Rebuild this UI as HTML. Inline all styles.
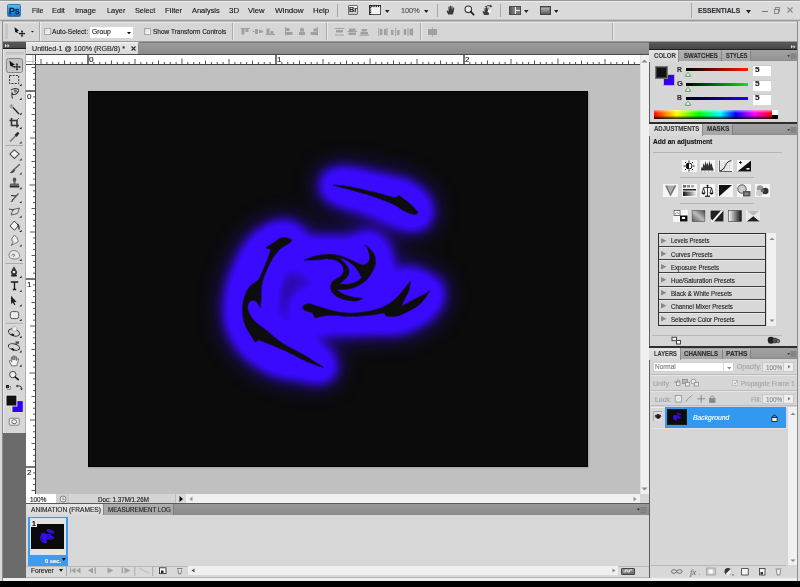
<!DOCTYPE html>
<html><head><meta charset="utf-8">
<style>
*{margin:0;padding:0;box-sizing:border-box}
html,body{width:800px;height:587px;overflow:hidden;background:#d8d8d8;font-family:"Liberation Sans",sans-serif;color:#222}
.a{position:absolute}
.t{position:absolute;white-space:nowrap;font-size:8px;line-height:10px;color:#1e1e1e;-webkit-text-stroke:0.12px currentColor}
svg{position:absolute;overflow:visible}
</style></head><body>
<div class="a" style="left:0;top:0;width:800px;height:21px;background:#dadada"></div>
<div class="a" style="left:0;top:0;width:800px;height:1px;background:#9a9a9a"></div>
<div class="a" style="left:0;top:1px;width:800px;height:1px;background:#ececec"></div>
<div class="a" style="left:0;top:19px;width:800px;height:1px;background:#c4c4c4"></div>
<div class="a" style="left:0;top:20px;width:800px;height:1px;background:#9c9c9c"></div>
<!-- Ps logo -->
<div class="a" style="left:7px;top:4px;width:14px;height:13px;background:linear-gradient(#52c0fa,#2a9aee 45%,#0a6ccc);border:1px solid #3a78b0;border-radius:1.5px"></div>
<div class="a" style="left:337px;top:4px;width:1px;height:13px;background:#a8a8a8"></div>
<!-- Br -->
<div class="a" style="left:347.5px;top:5px;width:10.5px;height:10px;background:linear-gradient(#f4f4f4,#c8c8c8);border:1px solid #6e6e6e;border-radius:1px"></div>
<!-- screen icon -->
<svg style="left:369px;top:5px" width="12" height="10" viewBox="0 0 12 10"><rect x="0.5" y="0.5" width="11" height="9" fill="#eee" stroke="#555" stroke-width="1"/><path d="M0,1.2H12M1.2,0V10" stroke="#222" stroke-width="2.2" stroke-dasharray="1.3,0.9"/><rect x="2.5" y="2.5" width="8.5" height="6.5" fill="#f2f2f2"/></svg>
<svg style="left:385px;top:9.5px" width="5" height="3"><path d="M0,0H4.5L2.25,3Z" fill="#222"/></svg>
<svg style="left:424px;top:9.5px" width="5" height="3"><path d="M0,0H4.5L2.25,3Z" fill="#222"/></svg>
<div class="a" style="left:436.5px;top:4px;width:1px;height:13px;background:#a8a8a8"></div>
<!-- hand -->
<svg style="left:446px;top:5px" width="10" height="10" viewBox="0 0 10 10"><path d="M2.2,9.5 L0.5,6 L1.3,5.4 L2.6,6.6 L2.4,1.8 Q2.9,1.2 3.4,1.8 L3.6,4.8 L3.8,0.9 Q4.4,0.3 4.9,0.9 L5.1,4.6 L5.5,1.3 Q6.1,0.8 6.5,1.4 L6.5,4.8 L7.3,2.6 Q7.9,2.2 8.3,2.8 L7.6,7 L6.8,9.5 Z" fill="#3a3a3a"/></svg>
<!-- zoom -->
<svg style="left:463.5px;top:5px" width="11" height="11" viewBox="0 0 11 11"><circle cx="4.3" cy="4.3" r="3.3" fill="#e8e8e8" stroke="#333" stroke-width="1.1"/><path d="M6.7,6.7 L9.6,9.6" stroke="#222" stroke-width="1.8" stroke-linecap="round"/></svg>
<!-- rotate -->
<svg style="left:482px;top:4px" width="11" height="12" viewBox="0 0 11 12"><path d="M2,11 L0.5,7.5 L1.4,7 L2.6,8 L2.5,4 Q3,3.4 3.5,4 L3.7,6 L3.9,3.3 Q4.5,2.7 5,3.3 L5.1,6 L5.5,3.8 Q6.1,3.3 6.5,3.9 L6.5,6.5 L7.2,5.5 Q7.8,5.2 8,5.8 L7.2,9 L6.5,11 Z" fill="#3c3c3c"/><path d="M3,3 Q6,0.5 9,2.2" fill="none" stroke="#444" stroke-width="1"/><path d="M8.2,0.6 L10.4,2.6 L7.6,3.4Z" fill="#333"/><path d="M6.5,5 L9.5,6.5 L8,9.5 L5.5,8Z" fill="#f4f4f4"/></svg>
<div class="a" style="left:500px;top:4px;width:1px;height:13px;background:#a8a8a8"></div>
<!-- arrange -->
<div class="a" style="left:509px;top:5.5px;width:11.5px;height:9px;background:#f0f0f0;border:1px solid #4a4a4a"></div>
<div class="a" style="left:510px;top:6.5px;width:4.5px;height:7px;background:linear-gradient(90deg,#555,#888)"></div>
<div class="a" style="left:515.5px;top:6.5px;width:4px;height:3px;background:#777"></div>
<div class="a" style="left:515.5px;top:10.5px;width:4px;height:3px;background:#777"></div>
<svg style="left:524px;top:9.5px" width="5" height="3"><path d="M0,0H4.5L2.25,3Z" fill="#222"/></svg>
<!-- screen mode -->
<div class="a" style="left:539.5px;top:6px;width:11px;height:8.5px;border:1px solid #444;background:linear-gradient(#8a8a8a,#5a5a5a)"></div>
<div class="a" style="left:541px;top:7.5px;width:8px;height:5.5px;background:linear-gradient(#b0b0b0,#6a6a6a)"></div>
<svg style="left:554px;top:9.5px" width="5" height="3"><path d="M0,0H4.5L2.25,3Z" fill="#222"/></svg>
<div class="a" style="left:690.5px;top:3px;width:1px;height:15px;background:#a8a8a8"></div>
<svg style="left:745.5px;top:9.5px" width="5" height="3.5"><path d="M0,0H5L2.5,3.5Z" fill="#222"/></svg>
<div class="a" style="left:761.5px;top:11px;width:6px;height:1.2px;background:#777"></div>
<div class="a" style="left:775px;top:7px;width:5px;height:4.5px;border:1px solid #888;border-top-width:1.5px"></div>
<div class="a" style="left:774px;top:8.5px;width:5px;height:5px;border:1px solid #888;border-top-width:1.5px;background:#dadada"></div>
<svg style="left:787px;top:7px" width="6" height="6"><path d="M0.5,0.5L5.5,5.5M5.5,0.5L0.5,5.5" stroke="#888" stroke-width="1.1"/></svg>
<div class="a" style="left:797px;top:21px;width:1px;height:560px;background:#8c8c8c"></div>
<div class="a" style="left:798px;top:21px;width:2px;height:560px;background:#dcdcdc"></div>

<div class="a" style="left:0;top:21px;width:797px;height:21px;background:#d6d6d6"></div>
<div class="a" style="left:2px;top:21px;width:795px;height:1px;background:#bdbdbd"></div>
<div class="a" style="left:2px;top:22px;width:795px;height:1px;background:#e6e6e6"></div>
<div class="a" style="left:0;top:21px;width:2px;height:560px;background:#d9d9d9"></div>
<div class="a" style="left:2px;top:21px;width:1px;height:560px;background:#8e8e8e"></div>
<div class="a" style="left:3px;top:41px;width:794px;height:1px;background:#9a9a9a"></div>
<div class="a" style="left:5px;top:24px;width:3px;height:15px;background:#c6c6c6"></div>
<!-- move icon -->
<svg style="left:13.5px;top:26.5px" width="12" height="10" viewBox="0 0 12 10"><path d="M0.5,0 L5,3.8 L3.2,4.2 L4.6,6.2 L1.2,5 Z" fill="#111"/><path d="M8,3.8V9.4M5.2,6.6H10.8" stroke="#111" stroke-width="1"/><path d="M8,3.3L6.8,4.8H9.2ZM8,9.9L6.8,8.4H9.2ZM4.7,6.6L6.2,5.4V7.8ZM11.3,6.6L9.8,5.4V7.8Z" fill="#111"/></svg>
<svg style="left:30.5px;top:30.7px" width="3" height="2"><path d="M0,0H2.8L1.4,1.6Z" fill="#111"/></svg>
<div class="a" style="left:39px;top:22px;width:1px;height:19px;background:#a9a9a9"></div>
<div class="a" style="left:40px;top:22px;width:1px;height:19px;background:#ececec"></div>
<!-- checkbox -->
<div class="a" style="left:43.5px;top:27.5px;width:7px;height:7px;border:1px solid #a8a8a8;background:linear-gradient(135deg,#dcdcdc,#fafafa)"></div>
<div class="a" style="left:90px;top:27px;width:43px;height:11px;background:#fff"></div>
<svg style="left:126.5px;top:32px" width="4" height="2.5"><path d="M0,0H4L2,2.2Z" fill="#000"/></svg>
<div class="a" style="left:144px;top:27.5px;width:7px;height:7px;border:1px solid #a8a8a8;background:linear-gradient(135deg,#dcdcdc,#fafafa)"></div>
<div class="a" style="left:232px;top:23px;width:1px;height:17px;background:#a9a9a9"></div>
<div class="a" style="left:233px;top:23px;width:1px;height:17px;background:#ececec"></div>
<div class="a" style="left:326px;top:23px;width:1px;height:17px;background:#a9a9a9"></div>
<div class="a" style="left:327px;top:23px;width:1px;height:17px;background:#ececec"></div>
<div class="a" style="left:419.5px;top:23px;width:1px;height:17px;background:#a9a9a9"></div>
<div class="a" style="left:420.5px;top:23px;width:1px;height:17px;background:#ececec"></div>
<div class="a" style="left:612px;top:23px;width:1px;height:17px;background:#a9a9a9"></div>
<div class="a" style="left:613px;top:23px;width:1px;height:17px;background:#ececec"></div>
<!-- align icons -->
<svg style="left:240px;top:27px" width="200" height="10" viewBox="240 27 200 10">
<g fill="#a0a0a0" stroke="none">
<rect x="240.8" y="28" width="9" height="1"/><rect x="241.5" y="29" width="3" height="5.5"/><rect x="245.5" y="29" width="3" height="3"/>
<rect x="252.5" y="31" width="2" height="1"/><rect x="255" y="29" width="3" height="5"/><rect x="259" y="30" width="2.5" height="3"/><path d="M261,30L263.5,31.5L261,33Z"/>
<rect x="265.6" y="34" width="9.4" height="1"/><rect x="266.5" y="28.5" width="3" height="5.5"/><rect x="270.5" y="31" width="3" height="3"/>
<rect x="285" y="27" width="1" height="8.6"/><rect x="286" y="28" width="3.5" height="3"/><rect x="286" y="32" width="6.5" height="3"/>
<rect x="301.5" y="27" width="1" height="8.6"/><rect x="300" y="28.5" width="4" height="3"/><rect x="299" y="32" width="6" height="3"/>
<rect x="317" y="27" width="1" height="8.6"/><rect x="313.5" y="28.5" width="3.5" height="3"/><rect x="310.6" y="32" width="6.4" height="3"/>
<rect x="334.7" y="28" width="9.8" height="1"/><rect x="336" y="30" width="7" height="2.5"/><rect x="335" y="34.5" width="9" height="1"/>
<rect x="347.5" y="31" width="9.7" height="1"/><rect x="349" y="28.5" width="6.5" height="2.5"/><rect x="348.5" y="32.5" width="7.5" height="2.5"/>
<rect x="359.5" y="34.7" width="9.7" height="1"/><rect x="361.5" y="29" width="5.5" height="2.5"/><rect x="360.5" y="32" width="7.5" height="2.5"/>
<rect x="378.2" y="28" width="1" height="8"/><rect x="380" y="29" width="2.5" height="6"/><rect x="384" y="29" width="2.5" height="6"/><rect x="386.5" y="28" width="1" height="8"/>
<rect x="391" y="30" width="2.5" height="5"/><rect x="395" y="28" width="1" height="8"/><rect x="397" y="30" width="2.5" height="5"/>
<rect x="403.7" y="29" width="2.5" height="6"/><rect x="407.5" y="28" width="1" height="8"/><rect x="409.5" y="29" width="2.5" height="6"/><rect x="412" y="28" width="1" height="8"/>
<rect x="428" y="29" width="4" height="6"/><rect x="433" y="29" width="4" height="6"/><rect x="432" y="27.5" width="1" height="9"/>
</g></svg>

<div class="a" style="left:3px;top:42px;width:23px;height:7px;background:linear-gradient(#585858,#4a4a4a);border-bottom:1px solid #1c1c1c"></div>
<svg style="left:4.5px;top:44px" width="5" height="4"><path d="M0,0L2,1.75L0,3.5ZM2.5,0L4.5,1.75L2.5,3.5Z" fill="#e8e8e8"/></svg>
<div class="a" style="left:3px;top:49px;width:23px;height:384px;background:#d7d7d7;border-left:1px solid #e9e9e9;border-right:1px solid #b0b0b0"></div>
<div class="a" style="left:5.5px;top:52px;width:18px;height:3px;background:#c8c8c8;border-top:1px solid #bdbdbd"></div>
<div class="a" style="left:3px;top:433px;width:23px;height:146px;background:#6b6b6b"></div>
<div class="a" style="left:26px;top:42px;width:0.6px;height:537px;background:#555"></div>
<!-- move tool button -->
<div class="a" style="left:6px;top:58px;width:17px;height:14.5px;border:1px solid #858585;border-radius:2.5px;background:linear-gradient(#c2c2c2,#cacaca)"></div>
<svg style="left:0;top:0" width="26" height="440" viewBox="0 0 26 440">
<g fill="#111">
<!-- move -->
<path d="M9.4,60.8 L15,64.8 L12.8,65.3 L14.2,67.2 L10.3,66 Z"/>
<path d="M17,63.8V70M13.9,66.9H20.1" stroke="#111" stroke-width="1"/>
<path d="M17,63.2L15.8,64.6H18.2ZM17,70.6L15.8,69.2H18.2ZM13.3,66.9L14.7,65.7V68.1ZM20.7,66.9L19.3,65.7V68.1Z"/>
<!-- small corner dots -->
<g fill="#1a1a1a">
<path d="M19.4,85.9L21.6,85.9L21.6,83.7Z"/><path d="M19.4,99.9L21.6,99.9L21.6,97.7Z"/><path d="M19.4,114.7L21.6,114.7L21.6,112.5Z"/><path d="M19.4,128.9L21.6,128.9L21.6,126.7Z"/><path d="M19.4,143.5L21.6,143.5L21.6,141.3Z"/>
<path d="M19.4,160.4L21.6,160.4L21.6,158.2Z"/><path d="M19.4,174.6L21.6,174.6L21.6,172.4Z"/><path d="M19.4,189.3L21.6,189.3L21.6,187.1Z"/><path d="M19.4,203.1L21.6,203.1L21.6,200.9Z"/><path d="M19.4,217.8L21.6,217.8L21.6,215.6Z"/><path d="M19.4,232.0L21.6,232.0L21.6,229.8Z"/><path d="M19.4,246.6L21.6,246.6L21.6,244.4Z"/><path d="M19.4,260.9L21.6,260.9L21.6,258.7Z"/>
<path d="M19.4,277.9L21.6,277.9L21.6,275.7Z"/><path d="M19.4,292.1L21.6,292.1L21.6,289.9Z"/><path d="M19.4,306.4L21.6,306.4L21.6,304.2Z"/><path d="M19.4,321.0L21.6,321.0L21.6,318.8Z"/>
<path d="M19.4,337.9L21.6,337.9L21.6,335.7Z"/><path d="M19.4,352.5L21.6,352.5L21.6,350.3Z"/><path d="M19.4,366.8L21.6,366.8L21.6,364.6Z"/>
</g>
</g>
<!-- marquee -->
<rect x="9.5" y="75.5" width="9.2" height="8" fill="none" stroke="#333" stroke-width="1" stroke-dasharray="2,1.2"/>
<!-- lasso -->
<path d="M11,90 Q14,87.5 18,89 Q19.5,91.5 16,94 Q13,95.5 12,93 Q11.5,96 12.5,98.5" fill="none" stroke="#3a3a3a" stroke-width="1.1"/>
<path d="M13.5,89 L16.5,89.5 L17,92 L14.5,93Z" fill="#777"/>
<!-- wand -->
<path d="M13,107.5 L19,114" stroke="#222" stroke-width="1.3"/>
<path d="M11.5,104 V108.5 M9.5,106.2 H13.5 M10,104.5 L13,108 M13,104.5 L10,108" stroke="#888" stroke-width="0.7"/>
<!-- crop -->
<path d="M11.5,118 V125.5 H19 M9.5,120.5 H17 V127.5" fill="none" stroke="#333" stroke-width="1.6"/>
<path d="M17,120 L19,118" stroke="#444" stroke-width="0.8"/>
<!-- eyedropper -->
<path d="M10,141.5 L15.5,136" stroke="#777" stroke-width="1.4"/>
<path d="M14.5,135 L17.5,132 Q19,132 19.3,133.5 L16.5,137 Z" fill="#2a2a2a"/>
<!-- separator -->
<rect x="5.5" y="145" width="17.5" height="0.9" fill="#a8a8a8"/>
<!-- healing (patch) -->
<path d="M14.4,149.8 L19.2,154 L14.4,158.4 L9.8,154 Z" fill="#f2f2f2" stroke="#555" stroke-width="1.1"/>
<!-- brush -->
<path d="M19.8,164.2 L13.5,170" stroke="#555" stroke-width="1.2"/>
<path d="M13.8,169 L10,172.8 Q11,173.5 13,172.8 L15.2,170.8 Z" fill="#444"/>
<!-- stamp -->
<ellipse cx="14.5" cy="179.8" rx="1.8" ry="2.2" fill="#555"/>
<path d="M13.5,181.5 V183.5 H10.5 Q9.5,184 9.8,186.5 H19.2 Q19.5,184 18.5,183.5 H15.5 V181.5Z" fill="#666"/>
<rect x="9.8" y="186" width="9.4" height="1.5" fill="#2a2a2a"/>
<!-- history brush -->
<path d="M18.5,193.5 L12,200.5" stroke="#555" stroke-width="1.2"/>
<path d="M11,195.5 L16,196" stroke="#222" stroke-width="1.2"/>
<path d="M12.5,199.5 L10.5,202 L13,201.5Z" fill="#444"/>
<!-- eraser -->
<path d="M13,209.5 L19.5,208 L17.5,213.5 L11,215 Z" fill="#ddd" stroke="#555" stroke-width="0.9"/>
<path d="M9,209 L14,210" stroke="#333" stroke-width="0.9"/>
<!-- bucket -->
<path d="M10,226 L14.3,221 L18.5,225.5 L14.5,230.2 Z" fill="#f4f4f4" stroke="#444" stroke-width="1"/>
<path d="M17.5,224 Q19.5,226 19,229.5" stroke="#222" stroke-width="1.4" fill="none"/>
<!-- blur drop -->
<path d="M14.5,235 Q17.8,238 18.2,240.5 Q18,243 15.5,243.2 L11,245.4 L13.2,242 Q10.8,240 12,238 Z" fill="#eee" stroke="#666" stroke-width="0.9"/>
<!-- dodge swirl -->
<path d="M9,255.5 Q9,250.5 14.5,250.5 Q19.5,251.5 19.8,256.5 Q19,259.2 14,259 Q9.3,258.8 9,255.5Z" fill="#e9e9e9" stroke="#777" stroke-width="0.9"/>
<path d="M11.5,255.5 Q12.5,253 14.5,254.5 Q15,256.5 13,256.5" fill="none" stroke="#666" stroke-width="0.8"/>
<rect x="5.5" y="263" width="17.5" height="0.9" fill="#a8a8a8"/>
<!-- pen -->
<path d="M14,266.2 L17.2,272 L16.2,275 H11.8 L10.8,272 Z" fill="#333"/>
<circle cx="14" cy="272" r="1.3" fill="#f0f0f0"/>
<rect x="11.2" y="275" width="5.6" height="1.5" fill="#222"/>
<!-- T -->
<path d="M10.8,282 H18.2 M14.5,282 V289.7 M12.8,289.5 H16.2" stroke="#1a1a1a" stroke-width="1.3"/>
<!-- path select arrow -->
<path d="M11,295.7 L16.5,301.8 L14.2,302.2 L15.5,304.7 L14.2,305 L12.8,302.6 L11,304 Z" fill="#222"/>
<!-- shape -->
<rect x="10.3" y="311.6" width="8.4" height="7" rx="2" fill="#ececec" stroke="#555" stroke-width="1"/>
<rect x="5.5" y="322.8" width="17.5" height="0.9" fill="#a8a8a8"/>
<!-- 3D rotate -->
<ellipse cx="14" cy="332.5" rx="5.7" ry="3.3" fill="none" stroke="#333" stroke-width="1" transform="rotate(20 14 332.5)"/>
<circle cx="14.5" cy="329" r="2.4" fill="#f0f0f0" stroke="#999" stroke-width="0.6"/>
<path d="M11.5,334 L14,335.5" stroke="#111" stroke-width="1.6"/>
<!-- 3D camera -->
<ellipse cx="14" cy="347" rx="5.8" ry="3" fill="none" stroke="#333" stroke-width="1" transform="rotate(15 14 347)"/>
<rect x="15.5" y="341.5" width="3.5" height="2.2" fill="#444"/>
<path d="M11.5,348.5 L14,350" stroke="#111" stroke-width="1.6"/>
<!-- hand -->
<path d="M11.5,365.8 L9.2,361 L10.3,360.2 L11.8,361.8 L11.5,357 Q12.1,356.3 12.7,357 L13,360 L13.2,356 Q13.9,355.4 14.5,356 L14.7,360 L15.3,356.6 Q16,356.1 16.5,356.8 L16.4,360.5 L17.3,358.6 Q18.1,358.3 18.6,359 L17.6,363.2 L16.6,365.9 Z" fill="#f2f2f2" stroke="#555" stroke-width="0.8"/>
<!-- zoom -->
<circle cx="12.8" cy="374.6" r="3.2" fill="#f0f0f0" stroke="#444" stroke-width="1"/>
<path d="M15.2,377 L18.3,379.6" stroke="#111" stroke-width="1.6" stroke-linecap="round"/>
<!-- default colors -->
<rect x="6" y="385" width="3" height="3" fill="#111"/><rect x="7.5" y="386.5" width="3" height="3" fill="none" stroke="#666" stroke-width="0.6"/>
<path d="M16.5,386 H19.5 Q21.5,386 21.5,388.5" fill="none" stroke="#222" stroke-width="0.9"/>
<path d="M16,386 L17.5,384.5 V387.5Z M21.5,390.2 L20,388.5 H23Z" fill="#222"/>
<!-- fg/bg -->
<rect x="12" y="400.7" width="11.2" height="11.7" fill="#3200f0" stroke="#f0f0e0" stroke-width="0.8"/>
<rect x="6" y="395.1" width="10.9" height="10.9" fill="#111" stroke="#f4f4e8" stroke-width="0.9"/>
<!-- quick mask -->
<rect x="9.2" y="418.2" width="10" height="7" rx="1" fill="#eee" stroke="#777" stroke-width="0.9"/>
<ellipse cx="14.2" cy="421.7" rx="2.5" ry="2" fill="#fff" stroke="#555" stroke-width="0.9"/>
</svg>


<!-- doc tab bar -->
<div class="a" style="left:26px;top:42px;width:623px;height:13px;background:linear-gradient(#9c9c9c,#8a8a8a);border-top:1px solid #7a7a7a"></div>
<div class="a" style="left:26px;top:42px;width:113px;height:12.5px;background:linear-gradient(#e6e6e6,#d9d9d9);border-top:1px solid #f2f2f2;border-right:1px solid #8a8a8a"></div>
<div class="a" style="left:26px;top:54px;width:623px;height:1px;background:#4a4a4a"></div>
<svg style="left:131px;top:46px" width="5" height="5"><path d="M0.5,0.5L4.5,4.5M4.5,0.5L0.5,4.5" stroke="#333" stroke-width="1.1"/></svg>
<!-- rulers -->
<div class="a" style="left:26px;top:55px;width:614px;height:10px;background:#fff"></div>
<div class="a" style="left:26px;top:65px;width:10px;height:429px;background:#fff"></div>
<svg style="left:0;top:0" width="800" height="587" viewBox="0 0 800 587">
<path d="M26,64.5H640 M35.5,55V494" stroke="#404040" stroke-width="1"/>
<path d="M26,61.5H36 M33,55V65" stroke="#b0b0b0" stroke-width="0.8"/>
<path d="M46.88,62.00V64.5 M52.75,62.00V64.5 M58.62,62.00V64.5 M70.38,62.00V64.5 M76.25,62.00V64.5 M82.12,62.00V64.5 M93.88,62.00V64.5 M99.75,62.00V64.5 M105.62,62.00V64.5 M117.38,62.00V64.5 M123.25,62.00V64.5 M129.12,62.00V64.5 M140.88,62.00V64.5 M146.75,62.00V64.5 M152.62,62.00V64.5 M164.38,62.00V64.5 M170.25,62.00V64.5 M176.12,62.00V64.5 M187.88,62.00V64.5 M193.75,62.00V64.5 M199.62,62.00V64.5 M211.38,62.00V64.5 M217.25,62.00V64.5 M223.12,62.00V64.5 M234.88,62.00V64.5 M240.75,62.00V64.5 M246.62,62.00V64.5 M258.38,62.00V64.5 M264.25,62.00V64.5 M270.12,62.00V64.5 M281.88,62.00V64.5 M287.75,62.00V64.5 M293.62,62.00V64.5 M305.38,62.00V64.5 M311.25,62.00V64.5 M317.12,62.00V64.5 M328.88,62.00V64.5 M334.75,62.00V64.5 M340.62,62.00V64.5 M352.38,62.00V64.5 M358.25,62.00V64.5 M364.12,62.00V64.5 M375.88,62.00V64.5 M381.75,62.00V64.5 M387.62,62.00V64.5 M399.38,62.00V64.5 M405.25,62.00V64.5 M411.12,62.00V64.5 M422.88,62.00V64.5 M428.75,62.00V64.5 M434.62,62.00V64.5 M446.38,62.00V64.5 M452.25,62.00V64.5 M458.12,62.00V64.5 M469.88,62.00V64.5 M475.75,62.00V64.5 M481.62,62.00V64.5 M493.38,62.00V64.5 M499.25,62.00V64.5 M505.12,62.00V64.5 M516.88,62.00V64.5 M522.75,62.00V64.5 M528.62,62.00V64.5 M540.38,62.00V64.5 M546.25,62.00V64.5 M552.12,62.00V64.5 M563.88,62.00V64.5 M569.75,62.00V64.5 M575.62,62.00V64.5 M587.38,62.00V64.5 M593.25,62.00V64.5 M599.12,62.00V64.5 M610.88,62.00V64.5 M616.75,62.00V64.5 M622.62,62.00V64.5 M634.38,62.00V64.5 M33.00,73.38H35.5 M33.00,79.25H35.5 M33.00,85.12H35.5 M33.00,96.88H35.5 M33.00,102.75H35.5 M33.00,108.62H35.5 M33.00,120.38H35.5 M33.00,126.25H35.5 M33.00,132.12H35.5 M33.00,143.88H35.5 M33.00,149.75H35.5 M33.00,155.62H35.5 M33.00,167.38H35.5 M33.00,173.25H35.5 M33.00,179.12H35.5 M33.00,190.88H35.5 M33.00,196.75H35.5 M33.00,202.62H35.5 M33.00,214.38H35.5 M33.00,220.25H35.5 M33.00,226.12H35.5 M33.00,237.88H35.5 M33.00,243.75H35.5 M33.00,249.62H35.5 M33.00,261.38H35.5 M33.00,267.25H35.5 M33.00,273.12H35.5 M33.00,284.88H35.5 M33.00,290.75H35.5 M33.00,296.62H35.5 M33.00,308.38H35.5 M33.00,314.25H35.5 M33.00,320.12H35.5 M33.00,331.88H35.5 M33.00,337.75H35.5 M33.00,343.62H35.5 M33.00,355.38H35.5 M33.00,361.25H35.5 M33.00,367.12H35.5 M33.00,378.88H35.5 M33.00,384.75H35.5 M33.00,390.62H35.5 M33.00,402.38H35.5 M33.00,408.25H35.5 M33.00,414.12H35.5 M33.00,425.88H35.5 M33.00,431.75H35.5 M33.00,437.62H35.5 M33.00,449.38H35.5 M33.00,455.25H35.5 M33.00,461.12H35.5 M33.00,472.88H35.5 M33.00,478.75H35.5 M33.00,484.62H35.5" stroke="#404040" stroke-width="0.9"/>
<path d="M41.00,59.00V64.5 M64.50,60.50V64.5 M88.00,54.50V64.5 M111.50,60.50V64.5 M135.00,59.00V64.5 M158.50,60.50V64.5 M182.00,58.50V64.5 M205.50,60.50V64.5 M229.00,59.00V64.5 M252.50,60.50V64.5 M276.00,54.50V64.5 M299.50,60.50V64.5 M323.00,59.00V64.5 M346.50,60.50V64.5 M370.00,58.50V64.5 M393.50,60.50V64.5 M417.00,59.00V64.5 M440.50,60.50V64.5 M464.00,54.50V64.5 M487.50,60.50V64.5 M511.00,59.00V64.5 M534.50,60.50V64.5 M558.00,58.50V64.5 M581.50,60.50V64.5 M605.00,59.00V64.5 M628.50,60.50V64.5 M31.50,67.50H35.5 M25.50,91.00H35.5 M31.50,114.50H35.5 M30.00,138.00H35.5 M31.50,161.50H35.5 M29.50,185.00H35.5 M31.50,208.50H35.5 M30.00,232.00H35.5 M31.50,255.50H35.5 M25.50,279.00H35.5 M31.50,302.50H35.5 M30.00,326.00H35.5 M31.50,349.50H35.5 M29.50,373.00H35.5 M31.50,396.50H35.5 M30.00,420.00H35.5 M31.50,443.50H35.5 M25.50,467.00H35.5 M31.50,490.50H35.5" stroke="#454545" stroke-width="0.9"/>
<path d="M88,55V64.5 M276,55V64.5 M464,55V64.5 M26,91H35.5 M26,279H35.5 M26,467H35.5" stroke="#404040" stroke-width="1"/>
</svg>
<!-- canvas bg -->
<div class="a" style="left:36px;top:65px;width:604px;height:429px;background:#c0c0c0"></div>
<div class="a" style="left:88px;top:467px;width:501px;height:2px;background:linear-gradient(#a8a8a8,#bcbcbc)"></div>
<div class="a" style="left:588px;top:92px;width:2px;height:376px;background:linear-gradient(90deg,#a8a8a8,#bcbcbc)"></div>
<!-- v scrollbar -->
<div class="a" style="left:640px;top:55px;width:9px;height:439px;background:#f0f0f0;border-left:1px solid #e0e0e0"></div>
<svg style="left:641px;top:59px" width="7" height="4"><path d="M0.5,3.5L3.5,0.5L6.5,3.5Z" fill="#8a8a8a"/></svg>
<svg style="left:641px;top:487px" width="7" height="4"><path d="M0.5,0.5L3.5,3.5L6.5,0.5Z" fill="#8a8a8a"/></svg>
<!-- status bar -->
<div class="a" style="left:26px;top:494px;width:623px;height:9px;background:#d9d9d9"></div>
<div class="a" style="left:26px;top:494px;width:29.5px;height:9px;background:#fff"></div>
<div class="a" style="left:56px;top:494px;width:13px;height:9px;background:#d0d0d0;border-right:1px solid #c0c0c0"></div>
<svg style="left:58.5px;top:494.8px" width="8" height="8"><circle cx="4" cy="4" r="3" fill="#e4e4e4" stroke="#888" stroke-width="1"/><path d="M4,2.5V4.5H5.5" stroke="#777" stroke-width="0.8" fill="none"/></svg>
<div class="a" style="left:69.5px;top:494px;width:106px;height:9px;background:#d4d4d4;border-right:1px solid #bcbcbc"></div>
<svg style="left:179px;top:495.5px" width="5" height="6"><path d="M0.5,0L4,3L0.5,6Z" fill="#000"/></svg>
<div class="a" style="left:185.5px;top:494px;width:454.5px;height:9px;background:#f0f0f0"></div>
<svg style="left:188.5px;top:496px" width="4" height="6"><path d="M3.5,0.5L0.5,3L3.5,5.5Z" fill="#999"/></svg>
<svg style="left:632.5px;top:496px" width="4" height="6"><path d="M0.5,0.5L3.5,3L0.5,5.5Z" fill="#999"/></svg>
<div class="a" style="left:640px;top:494px;width:9px;height:9px;background:#d6d6d6"></div>

<svg class="a" style="left:88px;top:91px" width="500" height="376" viewBox="88 91 500 376">
<defs>
<filter id="gl" x="-50%" y="-50%" width="200%" height="200%" color-interpolation-filters="sRGB">
<feGaussianBlur in="SourceAlpha" stdDeviation="10" result="b"/>
<feComponentTransfer in="b" result="bb"><feFuncA type="linear" slope="10" intercept="-0.13"/></feComponentTransfer>
<feGaussianBlur in="bb" stdDeviation="4.5" result="core"/>
<feGaussianBlur in="bb" stdDeviation="13" result="h0"/>
<feComponentTransfer in="h0" result="halo"><feFuncA type="linear" slope="0.55" intercept="0"/></feComponentTransfer>
<feComposite in="core" in2="halo" operator="over" result="bc0"/>
<feComponentTransfer in="bc0" result="bc"><feFuncA type="linear" slope="1.12" intercept="0"/></feComponentTransfer>
<feFlood flood-color="#3a0aff"/>
<feComposite in2="bc" operator="in" result="g"/>
</filter>
<filter id="sp" x="-100%" y="-100%" width="300%" height="300%"><feGaussianBlur stdDeviation="6"/></filter>
<filter id="sb" x="-10%" y="-10%" width="120%" height="120%"><feGaussianBlur stdDeviation="0.45"/></filter>
<g id="shp">
<path d="M333.00,185.00 C333.00,185.00 343.00,185.65 350.00,186.90 C357.00,188.15 367.72,190.73 375.00,192.50 C382.28,194.27 389.75,197.02 393.70,197.50 C397.65,197.98 398.70,195.40 398.70,195.40 C398.70,195.40 400.20,196.29 402.50,198.10 C404.80,199.91 409.90,203.85 412.50,206.25 C415.10,208.65 418.10,212.50 418.10,212.50 C418.10,212.50 417.18,214.61 415.00,214.40 C412.82,214.19 408.75,213.03 405.00,211.25 C401.25,209.47 397.50,206.14 392.50,203.75 C387.50,201.36 381.04,198.98 375.00,196.90 C368.96,194.82 362.08,192.92 356.25,191.25 C350.42,189.58 343.88,187.94 340.00,186.90 C336.12,185.86 333.00,185.00 333.00,185.00 Z"/>
<path d="M291.00,239.50 C289.80,238.70 285.67,237.00 282.70,237.60 C279.73,238.20 275.98,241.38 273.20,243.10 C270.42,244.82 266.00,247.90 266.00,247.90 C266.00,247.90 270.80,249.10 270.80,249.10 C270.80,249.10 269.30,255.02 268.00,258.60 C266.70,262.18 264.52,267.03 263.00,270.60 C261.48,274.17 258.90,280.00 258.90,280.00 C258.90,280.00 251.78,284.10 249.30,287.30 C246.82,290.50 245.12,295.23 244.00,299.20 C242.88,303.17 242.52,307.13 242.60,311.10 C242.68,315.07 243.38,319.42 244.50,323.00 C245.62,326.58 247.50,329.40 249.30,332.60 C251.10,335.80 255.30,342.20 255.30,342.20 C255.30,342.20 258.90,339.80 258.90,339.80 C258.90,339.80 266.03,342.62 270.80,344.60 C275.57,346.58 281.53,348.92 287.50,351.70 C293.47,354.48 300.63,358.67 306.60,361.30 C312.57,363.93 323.30,367.50 323.30,367.50 C323.30,367.50 310.97,359.32 304.20,355.30 C297.43,351.28 289.07,347.58 282.70,343.40 C276.33,339.22 270.78,333.98 266.00,330.20 C261.22,326.42 256.98,323.88 254.00,320.70 C251.02,317.52 249.08,313.88 248.10,311.10 C247.12,308.32 247.50,305.78 248.10,304.00 C248.70,302.22 250.30,300.80 251.70,300.40 C253.10,300.00 255.07,300.40 256.50,301.60 C257.93,302.80 260.30,307.60 260.30,307.60 C260.30,307.60 260.88,302.18 261.00,299.20 C261.12,296.22 260.75,292.68 261.00,289.70 C261.25,286.72 261.58,284.58 262.50,281.30 C263.42,278.02 264.83,273.80 266.50,270.00 C268.17,266.20 270.25,262.00 272.50,258.50 C274.75,255.00 277.10,251.68 280.00,249.00 C282.90,246.32 288.07,243.98 289.90,242.40 C291.73,240.82 292.20,240.30 291.00,239.50 Z"/>
<path d="M304.50,259.90 C304.50,259.90 312.08,256.92 316.00,256.00 C319.92,255.08 324.30,254.48 328.00,254.40 C331.70,254.32 334.80,254.75 338.20,255.50 C341.60,256.25 345.33,257.67 348.40,258.90 C351.47,260.13 354.10,261.83 356.60,262.90 C359.10,263.97 363.40,265.30 363.40,265.30 C363.40,265.30 367.43,263.47 368.50,262.00 C369.57,260.53 369.88,258.58 369.80,256.50 C369.72,254.42 368.82,251.42 368.00,249.50 C367.18,247.58 364.90,245.00 364.90,245.00 C364.90,245.00 369.82,248.42 371.50,250.50 C373.18,252.58 374.42,255.08 375.00,257.50 C375.58,259.92 375.42,262.75 375.00,265.00 C374.58,267.25 373.55,268.97 372.50,271.00 C371.45,273.03 370.10,275.40 368.70,277.20 C367.30,279.00 366.12,280.27 364.10,281.80 C362.08,283.33 359.08,285.25 356.60,286.40 C354.12,287.55 351.59,288.18 349.20,288.70 C346.81,289.22 344.27,289.41 342.25,289.50 C340.23,289.59 337.10,289.25 337.10,289.25 C337.10,289.25 340.00,284.40 340.00,284.40 C340.00,284.40 345.52,284.70 348.00,284.40 C350.48,284.10 352.78,283.52 354.90,282.60 C357.02,281.68 359.55,279.90 360.70,278.90 C361.85,277.90 361.80,276.60 361.80,276.60 C361.80,276.60 361.22,276.70 360.70,275.90 C360.18,275.10 359.60,273.28 358.70,271.80 C357.80,270.32 356.67,268.48 355.30,267.00 C353.93,265.52 352.22,264.15 350.50,262.90 C348.78,261.65 347.05,260.45 345.00,259.50 C342.95,258.55 340.70,257.48 338.20,257.20 C335.70,256.92 333.37,257.37 330.00,257.80 C326.63,258.23 322.25,259.45 318.00,259.80 C313.75,260.15 304.50,259.90 304.50,259.90 Z"/>
<path d="M326.00,256.30 C326.00,256.30 335.37,256.92 338.20,257.80 C341.03,258.68 341.52,260.17 343.00,261.60 C344.48,263.03 346.13,264.93 347.10,266.40 C348.07,267.87 348.58,269.05 348.80,270.40 C349.02,271.75 348.92,273.13 348.40,274.50 C347.88,275.87 346.83,277.40 345.70,278.60 C344.57,279.80 342.63,280.63 341.60,281.70 C340.57,282.77 340.25,283.74 339.50,285.00 C338.75,286.26 337.10,289.25 337.10,289.25 C337.10,289.25 337.47,290.64 338.80,291.60 C340.13,292.56 342.61,294.05 345.10,295.00 C347.59,295.95 350.87,296.72 353.75,297.30 C356.63,297.88 362.40,298.50 362.40,298.50 C362.40,298.50 359.00,300.52 356.60,300.80 C354.20,301.08 350.77,300.68 348.00,300.20 C345.23,299.72 342.30,298.87 340.00,297.90 C337.70,296.93 335.65,295.65 334.20,294.40 C332.75,293.15 331.87,291.83 331.30,290.40 C330.73,288.97 330.60,287.23 330.80,285.80 C331.00,284.37 331.55,282.95 332.50,281.80 C333.45,280.65 335.05,279.87 336.50,278.90 C337.95,277.93 340.02,277.23 341.20,276.00 C342.38,274.77 343.25,273.00 343.60,271.50 C343.95,270.00 343.85,268.43 343.30,267.00 C342.75,265.57 341.72,264.08 340.30,262.90 C338.88,261.72 336.85,260.57 334.80,259.90 C332.75,259.23 328.00,258.90 328.00,258.90 C328.00,258.90 326.00,256.30 326.00,256.30 Z"/>
<path d="M302.90,306.50 C303.63,305.48 305.93,303.72 309.00,303.90 C312.07,304.08 316.34,306.20 321.30,307.60 C326.26,309.00 332.93,311.40 338.75,312.30 C344.57,313.20 350.42,313.33 356.25,313.00 C362.08,312.67 368.50,311.68 373.75,310.30 C379.00,308.93 383.67,307.13 387.75,304.75 C391.83,302.37 395.04,299.21 398.25,296.00 C401.46,292.79 404.96,287.98 407.00,285.50 C409.04,283.02 410.50,281.10 410.50,281.10 C410.50,281.10 409.92,287.39 408.75,290.75 C407.58,294.11 404.67,298.62 403.50,301.25 C402.33,303.88 401.75,306.50 401.75,306.50 C401.75,306.50 410.21,301.54 414.00,299.50 C417.79,297.46 421.88,295.71 424.50,294.25 C427.12,292.79 429.75,290.75 429.75,290.75 C429.75,290.75 424.50,299.64 421.00,303.00 C417.50,306.36 412.83,308.72 408.75,310.90 C404.67,313.08 400.29,315.23 396.50,316.10 C392.71,316.97 386.00,316.10 386.00,316.10 C386.00,316.10 384.25,312.80 384.25,312.80 C384.25,312.80 371.12,315.02 365.00,315.60 C358.88,316.18 353.33,316.40 347.50,316.30 C341.67,316.20 335.40,314.73 330.00,315.00 C324.60,315.27 315.10,317.90 315.10,317.90 C315.10,317.90 312.50,312.60 312.50,312.60 C312.50,312.60 306.20,311.02 304.60,310.00 C303.00,308.98 302.17,307.52 302.90,306.50 Z"/>
</g>
</defs>
<rect x="88" y="91" width="500" height="376" fill="#0b0b0b"/>
<rect x="88.5" y="91.5" width="499" height="375" fill="none" stroke="#000" stroke-width="1"/>
<ellipse cx="296" cy="281" rx="13" ry="15" fill="#3a0aff" opacity="0.4" filter="url(#sp)"/>
<g filter="url(#gl)"><use href="#shp" stroke="#000" stroke-width="9" stroke-linejoin="round"/><path d="M262,248 Q240,285 242,318 Q250,350 292,364" fill="none" stroke="#000" stroke-width="7"/></g>
<g filter="url(#sb)" fill="#0d0d0d"><use href="#shp" stroke="#0d0d0d" stroke-width="0.7" stroke-linejoin="round"/></g>
</svg>

<!-- animation panel -->
<div class="a" style="left:26px;top:503px;width:623px;height:1px;background:#5a5a5a"></div>
<div class="a" style="left:26px;top:504px;width:623px;height:11px;background:linear-gradient(#979797,#8a8a8a)"></div>
<div class="a" style="left:26px;top:504px;width:78px;height:11px;background:linear-gradient(#e4e4e4,#dadada);border-right:1px solid #8a8a8a"></div>
<div class="a" style="left:104px;top:504px;width:70px;height:11px;background:linear-gradient(#aeaeae,#a2a2a2);border-right:1px solid #7e7e7e"></div>
<svg style="left:637px;top:507px" width="10" height="6"><path d="M0,1.5H3L1.5,3.5Z" fill="#222"/><rect x="3.5" y="0" width="6" height="6" fill="#7a7a7a"/><path d="M3.5,1.5H9.5M3.5,3H9.5M3.5,4.5H9.5" stroke="#9a9a9a" stroke-width="0.5"/></svg>
<div class="a" style="left:26px;top:515px;width:623px;height:51px;background:#d7d7d7"></div>
<!-- frame -->
<div class="a" style="left:27.8px;top:516.5px;width:40.2px;height:49px;background:#3d9bf0"></div>
<div class="a" style="left:29.7px;top:518.4px;width:36.4px;height:37px;background:#e8e2da;border:1px solid #cfe6fb"></div>
<div class="a" style="left:31px;top:524px;width:33.2px;height:25px;background:#0a0a0a"></div>
<div class="a" style="left:31px;top:520.3px;width:5.8px;height:6.4px;background:#ece6dc"></div>
<svg style="left:0;top:0" width="800" height="587" viewBox="0 0 800 587"><defs><filter id="th1" x="-50%" y="-50%" width="200%" height="200%"><feGaussianBlur stdDeviation="0.7"/></filter></defs><g filter="url(#th1)" fill="#3a10ff"><path d="M42.35,533.06 C42.86,532.88 43.92,532.77 44.48,532.90 C45.04,533.02 45.15,533.64 45.71,533.82 C46.27,534.00 47.13,533.96 47.85,533.96 C48.56,533.96 49.43,533.67 49.99,533.83 C50.55,533.98 50.95,534.51 51.21,534.89 C51.46,535.27 51.21,535.83 51.52,536.08 C51.82,536.34 52.59,536.21 53.04,536.42 C53.50,536.62 54.14,536.92 54.24,537.33 C54.34,537.73 54.10,538.50 53.64,538.85 C53.19,539.21 52.38,539.37 51.52,539.47 C50.65,539.57 49.33,539.42 48.46,539.47 C47.60,539.52 46.57,539.36 46.32,539.77 C46.06,540.18 46.89,541.35 46.94,541.91 C46.98,542.47 47.11,542.97 46.60,543.12 C46.09,543.28 44.74,543.13 43.88,542.82 C43.02,542.52 42.04,541.96 41.42,541.30 C40.81,540.64 40.37,539.72 40.22,538.85 C40.07,537.98 40.32,536.90 40.52,536.08 C40.72,535.27 41.12,534.46 41.42,533.96 C41.73,533.46 41.85,533.23 42.35,533.06 Z"/><ellipse cx="50.52" cy="531.24" rx="3.98" ry="1.59" transform="rotate(20 50.52 531.24)"/></g><g fill="#141414" opacity="0.8"><path d="M47.27,530.24 C47.27,530.24 47.93,530.28 48.40,530.37 C48.86,530.45 49.57,530.62 50.06,530.74 C50.54,530.86 51.04,531.04 51.30,531.07 C51.56,531.10 51.63,530.93 51.63,530.93 C51.63,530.93 51.73,530.99 51.88,531.11 C52.04,531.23 52.37,531.49 52.55,531.65 C52.72,531.81 52.92,532.07 52.92,532.07 C52.92,532.07 52.86,532.21 52.71,532.19 C52.57,532.18 52.30,532.10 52.05,531.98 C51.80,531.87 51.55,531.65 51.22,531.49 C50.89,531.33 50.46,531.17 50.06,531.03 C49.66,530.89 49.20,530.77 48.81,530.66 C48.42,530.55 47.99,530.44 47.73,530.37 C47.48,530.30 47.27,530.24 47.27,530.24 Z"/><path d="M44.48,533.86 C44.40,533.81 44.13,533.69 43.93,533.73 C43.73,533.77 43.48,533.99 43.30,534.10 C43.11,534.21 42.82,534.42 42.82,534.42 C42.82,534.42 43.14,534.50 43.14,534.50 C43.14,534.50 43.04,534.89 42.95,535.13 C42.87,535.37 42.72,535.69 42.62,535.93 C42.52,536.16 42.35,536.55 42.35,536.55 C42.35,536.55 41.88,536.82 41.71,537.03 C41.55,537.25 41.43,537.56 41.36,537.82 C41.28,538.09 41.26,538.35 41.27,538.61 C41.27,538.88 41.32,539.17 41.39,539.40 C41.47,539.64 41.59,539.83 41.71,540.04 C41.83,540.25 42.11,540.68 42.11,540.68 C42.11,540.68 42.35,540.52 42.35,540.52 C42.35,540.52 42.82,540.71 43.14,540.84 C43.45,540.97 43.85,541.13 44.25,541.31 C44.64,541.50 45.12,541.77 45.52,541.95 C45.91,542.12 46.62,542.36 46.62,542.36 C46.62,542.36 45.80,541.82 45.36,541.55 C44.91,541.28 44.35,541.04 43.93,540.76 C43.51,540.48 43.14,540.13 42.82,539.88 C42.50,539.63 42.22,539.46 42.02,539.25 C41.82,539.04 41.70,538.80 41.63,538.61 C41.57,538.43 41.59,538.26 41.63,538.14 C41.67,538.02 41.78,537.93 41.87,537.90 C41.96,537.88 42.09,537.90 42.19,537.98 C42.28,538.06 42.44,538.38 42.44,538.38 C42.44,538.38 42.48,538.02 42.49,537.82 C42.49,537.63 42.47,537.39 42.49,537.19 C42.50,537.00 42.53,536.85 42.59,536.64 C42.65,536.42 42.74,536.14 42.85,535.89 C42.96,535.63 43.10,535.35 43.25,535.12 C43.40,534.89 43.56,534.67 43.75,534.49 C43.94,534.31 44.28,534.16 44.41,534.05 C44.53,533.95 44.56,533.91 44.48,533.86 Z"/><path d="M45.41,535.18 C45.41,535.18 45.88,535.01 46.14,534.96 C46.39,534.90 46.69,534.86 46.94,534.85 C47.18,534.84 47.39,534.87 47.61,534.92 C47.84,534.97 48.09,535.07 48.29,535.15 C48.49,535.23 48.67,535.34 48.84,535.41 C49.00,535.48 49.29,535.57 49.29,535.57 C49.29,535.57 49.55,535.45 49.63,535.35 C49.70,535.26 49.72,535.13 49.71,534.99 C49.71,534.85 49.65,534.65 49.59,534.52 C49.54,534.40 49.39,534.23 49.39,534.23 C49.39,534.23 49.71,534.45 49.82,534.59 C49.94,534.73 50.02,534.90 50.06,535.06 C50.10,535.22 50.08,535.40 50.06,535.55 C50.03,535.70 49.96,535.82 49.89,535.95 C49.82,536.09 49.73,536.24 49.64,536.36 C49.55,536.48 49.47,536.57 49.33,536.67 C49.20,536.77 49.00,536.90 48.84,536.97 C48.67,537.05 48.50,537.09 48.34,537.13 C48.18,537.16 48.02,537.17 47.88,537.18 C47.75,537.19 47.54,537.16 47.54,537.16 C47.54,537.16 47.73,536.84 47.73,536.84 C47.73,536.84 48.10,536.86 48.26,536.84 C48.43,536.82 48.58,536.78 48.72,536.72 C48.86,536.66 49.03,536.54 49.11,536.48 C49.18,536.41 49.18,536.32 49.18,536.32 C49.18,536.32 49.14,536.33 49.11,536.28 C49.07,536.22 49.03,536.10 48.97,536.01 C48.91,535.91 48.84,535.78 48.75,535.69 C48.66,535.59 48.54,535.50 48.43,535.41 C48.32,535.33 48.20,535.25 48.06,535.19 C47.93,535.13 47.80,535.07 47.61,535.04 C47.43,535.00 47.18,534.98 46.94,534.99 C46.69,535.00 46.39,535.06 46.14,535.09 C45.88,535.12 45.41,535.18 45.41,535.18 Z"/><path d="M46.80,534.98 C46.80,534.98 47.43,535.02 47.61,535.08 C47.80,535.13 47.83,535.23 47.93,535.33 C48.03,535.42 48.14,535.55 48.20,535.65 C48.27,535.74 48.30,535.82 48.32,535.91 C48.33,536.00 48.32,536.09 48.29,536.18 C48.26,536.28 48.19,536.38 48.11,536.46 C48.04,536.54 47.91,536.59 47.84,536.66 C47.77,536.73 47.75,536.80 47.70,536.88 C47.65,536.97 47.54,537.16 47.54,537.16 C47.54,537.16 47.56,537.26 47.65,537.32 C47.74,537.38 47.91,537.48 48.07,537.55 C48.24,537.61 48.45,537.66 48.65,537.70 C48.84,537.74 49.22,537.78 49.22,537.78 C49.22,537.78 48.99,537.91 48.84,537.93 C48.68,537.95 48.45,537.92 48.26,537.89 C48.08,537.86 47.89,537.80 47.73,537.74 C47.58,537.67 47.44,537.59 47.35,537.51 C47.25,537.42 47.19,537.34 47.16,537.24 C47.12,537.14 47.11,537.03 47.12,536.93 C47.14,536.84 47.17,536.75 47.23,536.67 C47.30,536.59 47.40,536.54 47.50,536.48 C47.60,536.41 47.73,536.37 47.81,536.28 C47.89,536.20 47.95,536.08 47.97,535.99 C48.00,535.89 47.99,535.78 47.95,535.69 C47.92,535.59 47.85,535.49 47.75,535.41 C47.66,535.34 47.52,535.26 47.39,535.21 C47.25,535.17 46.94,535.15 46.94,535.15 C46.94,535.15 46.80,534.98 46.80,534.98 Z"/><path d="M45.27,538.31 C45.32,538.24 45.47,538.12 45.67,538.14 C45.88,538.15 46.16,538.29 46.49,538.38 C46.82,538.48 47.26,538.63 47.65,538.69 C48.04,538.75 48.42,538.76 48.81,538.74 C49.20,538.72 49.63,538.65 49.97,538.56 C50.32,538.47 50.63,538.35 50.90,538.19 C51.17,538.03 51.39,537.83 51.60,537.61 C51.81,537.40 52.05,537.08 52.18,536.91 C52.32,536.75 52.41,536.62 52.41,536.62 C52.41,536.62 52.38,537.04 52.30,537.26 C52.22,537.49 52.03,537.79 51.95,537.96 C51.87,538.13 51.83,538.31 51.83,538.31 C51.83,538.31 52.39,537.98 52.65,537.84 C52.90,537.71 53.17,537.59 53.34,537.50 C53.52,537.40 53.69,537.26 53.69,537.26 C53.69,537.26 53.34,537.85 53.11,538.08 C52.88,538.30 52.57,538.46 52.30,538.60 C52.03,538.75 51.74,538.89 51.48,538.95 C51.23,539.00 50.79,538.95 50.79,538.95 C50.79,538.95 50.67,538.73 50.67,538.73 C50.67,538.73 49.80,538.87 49.39,538.91 C48.99,538.95 48.62,538.97 48.23,538.96 C47.84,538.95 47.43,538.86 47.07,538.87 C46.71,538.89 46.08,539.07 46.08,539.07 C46.08,539.07 45.91,538.71 45.91,538.71 C45.91,538.71 45.49,538.61 45.38,538.54 C45.28,538.47 45.22,538.38 45.27,538.31 Z"/></g></svg>
<svg style="left:61.5px;top:558px" width="4" height="3"><path d="M0,0H3.6L1.8,3Z" fill="#000"/></svg>
<!-- bottom toolbar -->
<div class="a" style="left:26px;top:565.6px;width:623px;height:1px;background:#b8b8b8"></div>
<div class="a" style="left:26px;top:566.5px;width:623px;height:11px;background:#d9d9d9"></div>
<svg style="left:59px;top:569px" width="4" height="3"><path d="M0,0H4L2,2.8Z" fill="#111"/></svg>
<div class="a" style="left:65.5px;top:567px;width:1px;height:9px;background:#a8a8a8"></div>
<svg style="left:64px;top:560px" width="130" height="20" viewBox="64 560 130 20">
<g fill="#a2a2a2">
<rect x="70" y="567.5" width="1" height="6"/><path d="M71,570.5L75.5,567.5V573.5Z M76,570.5L80.5,567.5V573.5Z"/>
<path d="M88,570.5L93,567.5V573.5Z"/><rect x="94.5" y="567.5" width="1.4" height="6"/>
<path d="M107.5,567.5L113.5,570.5L107.5,573.5Z"/>
<rect x="121.7" y="567.5" width="1.4" height="6"/><path d="M124.5,567.5L130.5,570.5L124.5,573.5Z"/>
<path d="M139,568 L149.5,573.5" stroke="#c4c4c4" stroke-width="1.6"/>
</g>
<rect x="134.3" y="567" width="0.9" height="9" fill="#a8a8a8"/>
<rect x="152.3" y="567" width="0.9" height="9" fill="#a8a8a8"/>
<rect x="159.5" y="567.8" width="6.5" height="5.8" fill="#fafafa" stroke="#333" stroke-width="0.9"/>
<rect x="161" y="570.5" width="2.5" height="2.5" fill="#222"/>
<path d="M177,568.5H182.5M178,569.5L178.5,573.7H181L181.5,569.5" fill="#e8e8e8" stroke="#777" stroke-width="0.9"/>
</svg>
<div class="a" style="left:187.5px;top:566px;width:430px;height:9px;background:#efefef"></div>
<svg style="left:190.5px;top:568px" width="4" height="5"><path d="M3.5,0.5L0.5,2.5L3.5,4.5Z" fill="#555"/></svg>
<svg style="left:611.5px;top:568px" width="4" height="5"><path d="M0.5,0.5L3.5,2.5L0.5,4.5Z" fill="#888"/></svg>
<div class="a" style="left:621px;top:567.5px;width:14px;height:7px;background:linear-gradient(#9a9a9a,#6a6a6a);border:1px solid #444;border-radius:1px"></div>
<svg style="left:623px;top:569px" width="10" height="4"><path d="M0.5,3H2.5V1H4.5V3H6.5V1H9" stroke="#f0f0f0" stroke-width="0.9" fill="none"/></svg>
<div class="a" style="left:26px;top:577px;width:623px;height:1px;background:#b4b4b4"></div>
<div class="a" style="left:3px;top:578px;width:794px;height:3px;background:#efefef"></div>
<div class="a" style="left:0;top:581px;width:800px;height:6px;background:#000"></div>

<div class="a" style="left:649px;top:42px;width:148px;height:539px;background:#d6d6d6"></div>
<div class="a" style="left:648.6px;top:42px;width:1px;height:536px;background:#5e5e5e"></div>
<div class="a" style="left:649px;top:42px;width:148px;height:7.5px;background:linear-gradient(#5a5a5a,#474747);border-bottom:1px solid #1e1e1e"></div>
<svg style="left:791px;top:44.8px" width="5" height="3.5"><path d="M0,0L2,1.75L0,3.5ZM2.5,0L4.5,1.75L2.5,3.5Z" fill="#e0e0e0"/></svg>
<div class="a" style="left:649px;top:49.5px;width:148px;height:11.5px;background:linear-gradient(#a2a2a2,#959595);border-bottom:1px solid #8a8a8a"></div>
<div class="a" style="left:649px;top:49.5px;width:30px;height:12.5px;background:linear-gradient(#e2e2e2,#d8d8d8);border-right:1px solid #8c8c8c"></div>
<div class="a" style="left:679px;top:50.0px;width:43px;height:11.0px;background:linear-gradient(#b0b0b0,#a4a4a4);border-right:1px solid #828282;border-top:1px solid #b8b8b8"></div>
<div class="a" style="left:722px;top:50.0px;width:29px;height:11.0px;background:linear-gradient(#b0b0b0,#a4a4a4);border-right:1px solid #828282;border-top:1px solid #b8b8b8"></div>
<svg style="left:786.5px;top:52.5px" width="10" height="6"><path d="M0.2,2.2H3L1.6,3.8Z" fill="#1a1a1a"/><rect x="3.6" y="0.3" width="5.6" height="5.4" fill="#7c7c7c"/><path d="M3.6,1.7H9.2M3.6,3H9.2M3.6,4.3H9.2" stroke="#929292" stroke-width="0.5"/></svg>
<div class="a" style="left:663px;top:73.8px;width:11.5px;height:12px;background:#3300ee;border:1px solid #b4b4b4"></div>
<div class="a" style="left:655px;top:66px;width:12.5px;height:12.5px;background:#111;border:1px solid #7a7a7a;box-shadow:inset 0 0 0 1px #3a3a3a"></div>
<div class="a" style="left:685.5px;top:67.5px;width:62.5px;height:3.5px;background:linear-gradient(90deg,#000,#ff1a00)"></div>
<svg style="left:684.5px;top:71.8px" width="6" height="5"><path d="M0.5,4.3 Q0.8,2 3,0.5 Q5.2,2 5.5,4.3Z" fill="#f4f4f4" stroke="#3a9a3a" stroke-width="0.9"/></svg>
<div class="a" style="left:685.5px;top:82.5px;width:62.5px;height:3.5px;background:linear-gradient(90deg,#000,#00e61a)"></div>
<svg style="left:684.5px;top:86.8px" width="6" height="5"><path d="M0.5,4.3 Q0.8,2 3,0.5 Q5.2,2 5.5,4.3Z" fill="#f4f4f4" stroke="#3a9a3a" stroke-width="0.9"/></svg>
<div class="a" style="left:685.5px;top:96.5px;width:62.5px;height:3.5px;background:linear-gradient(90deg,#000,#1a00ff)"></div>
<svg style="left:684.5px;top:100.8px" width="6" height="5"><path d="M0.5,4.3 Q0.8,2 3,0.5 Q5.2,2 5.5,4.3Z" fill="#f4f4f4" stroke="#3a9a3a" stroke-width="0.9"/></svg>
<div class="a" style="left:752.5px;top:64.5px;width:18.5px;height:11px;background:#fff;border-top:1px solid #c8c8c8"></div>
<div class="a" style="left:752.5px;top:80px;width:18.5px;height:11px;background:#fff;border-top:1px solid #c8c8c8"></div>
<div class="a" style="left:752.5px;top:94px;width:18.5px;height:11px;background:#fff;border-top:1px solid #c8c8c8"></div>
<div class="a" style="left:653.5px;top:110px;width:118.5px;height:9px;background:linear-gradient(90deg,#ff0000,#ffff00 19%,#00ff00 38%,#00ffff 56%,#0000ff 69%,#ff00ff 85%,#ff0000)"></div>
<div class="a" style="left:653.5px;top:110px;width:118.5px;height:9px;background:linear-gradient(rgba(255,255,255,0.55),rgba(255,255,255,0) 35%,rgba(0,0,0,0) 60%,rgba(0,0,0,0.9))"></div>
<div class="a" style="left:772px;top:110px;width:5.5px;height:4.5px;background:#fff"></div>
<div class="a" style="left:772px;top:114.5px;width:5.5px;height:4.5px;background:#000"></div>
<div class="a" style="left:649px;top:121.6px;width:148px;height:2px;background:#2e2e2e"></div>
<div class="a" style="left:649px;top:123.6px;width:148px;height:11px;background:linear-gradient(#a2a2a2,#959595);border-bottom:1px solid #8a8a8a"></div>
<div class="a" style="left:649px;top:123.6px;width:54px;height:12px;background:linear-gradient(#e2e2e2,#d8d8d8);border-right:1px solid #8c8c8c"></div>
<div class="a" style="left:703px;top:124.1px;width:30px;height:10.5px;background:linear-gradient(#b0b0b0,#a4a4a4);border-right:1px solid #828282;border-top:1px solid #b8b8b8"></div>
<svg style="left:786.5px;top:126.6px" width="10" height="6"><path d="M0.2,2.2H3L1.6,3.8Z" fill="#1a1a1a"/><rect x="3.6" y="0.3" width="5.6" height="5.4" fill="#7c7c7c"/><path d="M3.6,1.7H9.2M3.6,3H9.2M3.6,4.3H9.2" stroke="#929292" stroke-width="0.5"/></svg>
<div class="a" style="left:653px;top:152.2px;width:129px;height:1px;background:#b4b4b4"></div>
<div class="a" style="left:679.7px;top:177.4px;width:74.3px;height:1px;background:#b4b4b4"></div>
<div class="a" style="left:679.7px;top:202.6px;width:74.3px;height:1px;background:#b4b4b4"></div>
<div class="a" style="left:682px;top:159.5px;width:14.5px;height:12.8px;background:#f6f6f6"></div>
<div class="a" style="left:700px;top:159.5px;width:14.5px;height:12.8px;background:#f6f6f6"></div>
<div class="a" style="left:718px;top:159.5px;width:14.5px;height:12.8px;background:#f6f6f6"></div>
<div class="a" style="left:736.7px;top:159.5px;width:14.5px;height:12.8px;background:#f6f6f6"></div>
<div class="a" style="left:663.2px;top:184.2px;width:14.5px;height:12.8px;background:#f6f6f6"></div>
<div class="a" style="left:682px;top:184.2px;width:14.5px;height:12.8px;background:#f6f6f6"></div>
<div class="a" style="left:700px;top:184.2px;width:14.5px;height:12.8px;background:#f6f6f6"></div>
<div class="a" style="left:718px;top:184.2px;width:14.5px;height:12.8px;background:#f6f6f6"></div>
<div class="a" style="left:736.7px;top:184.2px;width:14.5px;height:12.8px;background:#f6f6f6"></div>
<div class="a" style="left:755px;top:184.2px;width:14.5px;height:12.8px;background:#f6f6f6"></div>
<div class="a" style="left:673px;top:209.7px;width:14.5px;height:12.8px;background:#f6f6f6"></div>
<div class="a" style="left:691px;top:209.7px;width:14.5px;height:12.8px;background:#f6f6f6"></div>
<div class="a" style="left:709.5px;top:209.7px;width:14.5px;height:12.8px;background:#f6f6f6"></div>
<div class="a" style="left:727.5px;top:209.7px;width:14.5px;height:12.8px;background:#f6f6f6"></div>
<div class="a" style="left:745.7px;top:209.7px;width:14.5px;height:12.8px;background:#f6f6f6"></div>
<div class="a" style="left:658px;top:233px;width:108px;height:93px;background:#d8d8d8;border:1px solid #2e2e2e;border-right-width:1.5px"></div>
<div class="a" style="left:659px;top:246.00px;width:106px;height:1px;background:#3e3e3e"></div>
<div class="a" style="left:659px;top:259.00px;width:106px;height:1px;background:#3e3e3e"></div>
<div class="a" style="left:659px;top:272.00px;width:106px;height:1px;background:#3e3e3e"></div>
<div class="a" style="left:659px;top:286.00px;width:106px;height:1px;background:#3e3e3e"></div>
<div class="a" style="left:659px;top:299.00px;width:106px;height:1px;background:#3e3e3e"></div>
<div class="a" style="left:659px;top:312.00px;width:106px;height:1px;background:#3e3e3e"></div>
<div class="a" style="left:659px;top:234px;width:106px;height:1px;background:#e8e8e8"></div>
<svg style="left:661px;top:237.50px" width="6" height="6"><path d="M0,0L5.5,2.75L0,5.5Z" fill="#8a8a8a"/></svg>
<div class="a" style="left:659px;top:247px;width:106px;height:1px;background:#e8e8e8"></div>
<svg style="left:661px;top:250.60px" width="6" height="6"><path d="M0,0L5.5,2.75L0,5.5Z" fill="#8a8a8a"/></svg>
<div class="a" style="left:659px;top:260px;width:106px;height:1px;background:#e8e8e8"></div>
<svg style="left:661px;top:263.70px" width="6" height="6"><path d="M0,0L5.5,2.75L0,5.5Z" fill="#8a8a8a"/></svg>
<div class="a" style="left:659px;top:273px;width:106px;height:1px;background:#e8e8e8"></div>
<svg style="left:661px;top:276.80px" width="6" height="6"><path d="M0,0L5.5,2.75L0,5.5Z" fill="#8a8a8a"/></svg>
<div class="a" style="left:659px;top:287px;width:106px;height:1px;background:#e8e8e8"></div>
<svg style="left:661px;top:289.90px" width="6" height="6"><path d="M0,0L5.5,2.75L0,5.5Z" fill="#8a8a8a"/></svg>
<div class="a" style="left:659px;top:300px;width:106px;height:1px;background:#e8e8e8"></div>
<svg style="left:661px;top:303.00px" width="6" height="6"><path d="M0,0L5.5,2.75L0,5.5Z" fill="#8a8a8a"/></svg>
<div class="a" style="left:659px;top:313px;width:106px;height:1px;background:#e8e8e8"></div>
<svg style="left:661px;top:316.10px" width="6" height="6"><path d="M0,0L5.5,2.75L0,5.5Z" fill="#8a8a8a"/></svg>
<div class="a" style="left:767px;top:232.6px;width:9px;height:93px;background:#f0f0f0"></div>
<svg style="left:768.5px;top:237px" width="6" height="3.5"><path d="M0.5,3L3,0.5L5.5,3Z" fill="#8a8a8a"/></svg>
<svg style="left:768.5px;top:318.5px" width="6" height="3.5"><path d="M0.5,0.5L3,3L5.5,0.5Z" fill="#8a8a8a"/></svg>
<div class="a" style="left:652px;top:334.5px;width:130px;height:1px;background:#b8b8b8"></div>
<svg style="left:0;top:0" width="800" height="587" viewBox="0 0 800 587"><rect x="672" y="337.2" width="4.5" height="3.5" fill="#fff" stroke="#333" stroke-width="0.9"/><rect x="676.5" y="340.5" width="4" height="3.5" fill="#fff" stroke="#333" stroke-width="0.9"/><circle cx="771" cy="340" r="3.3" fill="#222"/><circle cx="775" cy="340.5" r="2.5" fill="#555" stroke="#222" stroke-width="0.6"/><circle cx="778" cy="341" r="1.8" fill="#777" stroke="#222" stroke-width="0.6"/><path d="M768,342.5 Q771,345 774,342.5" stroke="#333" stroke-width="0.7" fill="none"/></svg>
<div class="a" style="left:649px;top:346.1px;width:148px;height:2px;background:#2e2e2e"></div>
<div class="a" style="left:649px;top:348.1px;width:148px;height:11px;background:linear-gradient(#a2a2a2,#959595);border-bottom:1px solid #8a8a8a"></div>
<div class="a" style="left:649px;top:348.1px;width:32px;height:12px;background:linear-gradient(#e2e2e2,#d8d8d8);border-right:1px solid #8c8c8c"></div>
<div class="a" style="left:681px;top:348.6px;width:41.60000000000002px;height:10.5px;background:linear-gradient(#b0b0b0,#a4a4a4);border-right:1px solid #828282;border-top:1px solid #b8b8b8"></div>
<div class="a" style="left:722.6px;top:348.6px;width:28.399999999999977px;height:10.5px;background:linear-gradient(#b0b0b0,#a4a4a4);border-right:1px solid #828282;border-top:1px solid #b8b8b8"></div>
<svg style="left:786.5px;top:351.1px" width="10" height="6"><path d="M0.2,2.2H3L1.6,3.8Z" fill="#1a1a1a"/><rect x="3.6" y="0.3" width="5.6" height="5.4" fill="#7c7c7c"/><path d="M3.6,1.7H9.2M3.6,3H9.2M3.6,4.3H9.2" stroke="#929292" stroke-width="0.5"/></svg>
<div class="a" style="left:652.5px;top:361.8px;width:81.5px;height:10.2px;background:#fff;border:1px solid #d0d0d0"></div>
<div class="a" style="left:723.4px;top:362.5px;width:0.8px;height:9px;background:#d8d8d8"></div>
<svg style="left:726.5px;top:366.5px" width="5" height="3"><path d="M0,0H4.4L2.2,2.6Z" fill="#8a8a8a"/></svg>
<div class="a" style="left:762.4px;top:361.9px;width:21.6px;height:10px;background:#e6e6e6;border:1px solid #cacaca"></div>
<div class="a" style="left:784px;top:361.9px;width:10px;height:10px;background:#eeeeee;border:1px solid #cacaca;border-left:none"></div>
<svg style="left:787.8px;top:365.09999999999997px" width="3" height="4"><path d="M0,0L2.4,1.8L0,3.6Z" fill="#777"/></svg>
<div class="a" style="left:762.4px;top:394px;width:21.6px;height:10px;background:#e6e6e6;border:1px solid #cacaca"></div>
<div class="a" style="left:784px;top:394px;width:10px;height:10px;background:#eeeeee;border:1px solid #cacaca;border-left:none"></div>
<svg style="left:787.8px;top:397.2px" width="3" height="4"><path d="M0,0L2.4,1.8L0,3.6Z" fill="#777"/></svg>
<div class="a" style="left:651px;top:373.6px;width:146px;height:1px;background:#bcbcbc"></div>
<div class="a" style="left:651px;top:374.6px;width:146px;height:1px;background:#e6e6e6"></div>
<div class="a" style="left:651px;top:389.7px;width:146px;height:1px;background:#bcbcbc"></div>
<div class="a" style="left:651px;top:390.7px;width:146px;height:1px;background:#e6e6e6"></div>
<div class="a" style="left:651px;top:405.2px;width:146px;height:1px;background:#bcbcbc"></div>
<div class="a" style="left:731.8px;top:379.5px;width:6.1px;height:6.1px;background:#f0f0f0;border:1px solid #c0c0c0"></div>
<svg style="left:732.5px;top:380px" width="5" height="5"><path d="M0.8,2.8L2,4.2L4.2,0.6" stroke="#999" stroke-width="0.8" fill="none"/></svg>
<svg style="left:0;top:0" width="800" height="587" viewBox="0 0 800 587"><g stroke="#8a8a8a" stroke-width="0.8" fill="#eee">
<path d="M674.5,381 L676,383.5" fill="none"/><rect x="676.5" y="382" width="3.5" height="3.5"/><path d="M677,382 V380.5 Q678.2,379 679.5,380.5 V382" fill="none"/>
<rect x="682.5" y="379.5" width="5" height="4" fill="#bbb"/><rect x="685.5" y="382.5" width="4" height="3.5"/>
<circle cx="693.5" cy="381.5" r="2.3"/><rect x="694.5" y="382.5" width="4" height="3.5"/>
<rect x="675.2" y="395.5" width="6.5" height="6.5" fill="#f4f4f4"/><path d="M675.2,395.5L681.7,402M681.7,395.5L675.2,402" stroke="#ccc"/>
<path d="M686,402 Q686.5,399.5 688.5,398.5 L692,395.3" fill="none" stroke="#999" stroke-width="1"/>
<path d="M697.5,398.8H705M701.2,395V402.5" fill="none" stroke="#777"/>
<rect x="709.5" y="398.5" width="5.5" height="4" fill="#888"/><path d="M710.5,398.5V397Q712.2,394.8 714,397V398.5" fill="none" stroke="#888"/>
</g></svg>
<div class="a" style="left:651px;top:406.5px;width:136px;height:1px;background:#ececec"></div>
<div class="a" style="left:664.9px;top:407.3px;width:121.3px;height:20.3px;background:#3399f0"></div>
<div class="a" style="left:653px;top:411.2px;width:9px;height:9.6px;background:#dcdcdc;border-left:1px solid #a8a8a8;border-top:1px solid #a8a8a8"></div>
<svg style="left:653.8px;top:412.5px" width="8" height="7"><path d="M0.3,3.8 Q4,-0.2 7.7,3.8 Q4,7 0.3,3.8Z" fill="#5a5a5a"/><path d="M1,2.6 Q4,0.2 7,2.6" stroke="#111" stroke-width="0.9" fill="none"/><circle cx="4.2" cy="3.8" r="1.9" fill="#151515"/></svg>
<div class="a" style="left:651px;top:427.6px;width:136px;height:1px;background:#e4e4e4"></div>
<div class="a" style="left:667px;top:409px;width:20.4px;height:15.7px;background:#0c0c0c;border:1px solid #1a1a1a"></div>
<svg style="left:0;top:0" width="800" height="587" viewBox="0 0 800 587"><defs><filter id="th2" x="-50%" y="-50%" width="200%" height="200%"><feGaussianBlur stdDeviation="0.5"/></filter></defs><g filter="url(#th2)" fill="#3a10ff"><path d="M674.29,414.96 C674.57,414.87 675.16,414.81 675.47,414.88 C675.78,414.95 675.84,415.29 676.15,415.38 C676.46,415.48 676.94,415.46 677.34,415.46 C677.73,415.46 678.21,415.30 678.52,415.39 C678.84,415.47 679.06,415.76 679.20,415.97 C679.34,416.18 679.20,416.49 679.37,416.62 C679.54,416.76 679.97,416.69 680.22,416.81 C680.47,416.92 680.82,417.08 680.88,417.31 C680.94,417.53 680.80,417.95 680.55,418.14 C680.30,418.34 679.85,418.42 679.37,418.48 C678.89,418.54 678.16,418.45 677.68,418.48 C677.20,418.51 676.63,418.42 676.49,418.64 C676.35,418.87 676.81,419.51 676.83,419.82 C676.86,420.12 676.93,420.40 676.65,420.48 C676.37,420.57 675.62,420.49 675.14,420.32 C674.66,420.15 674.12,419.84 673.78,419.48 C673.44,419.12 673.19,418.62 673.11,418.14 C673.02,417.67 673.17,417.07 673.28,416.62 C673.39,416.18 673.61,415.74 673.78,415.46 C673.95,415.18 674.01,415.06 674.29,414.96 Z"/><ellipse cx="678.82" cy="413.97" rx="2.21" ry="0.87" transform="rotate(20 678.82 413.97)"/></g><g fill="#141414" opacity="0.8"><path d="M677.02,413.42 C677.02,413.42 677.38,413.45 677.64,413.49 C677.90,413.54 678.29,413.63 678.56,413.69 C678.83,413.76 679.10,413.86 679.25,413.88 C679.40,413.89 679.43,413.80 679.43,413.80 C679.43,413.80 679.49,413.83 679.57,413.90 C679.66,413.96 679.85,414.11 679.94,414.20 C680.04,414.28 680.15,414.42 680.15,414.42 C680.15,414.42 680.11,414.50 680.03,414.49 C679.95,414.48 679.80,414.44 679.67,414.38 C679.53,414.31 679.39,414.19 679.21,414.10 C679.02,414.02 678.78,413.93 678.56,413.85 C678.34,413.78 678.09,413.71 677.87,413.65 C677.66,413.59 677.42,413.53 677.27,413.49 C677.13,413.45 677.02,413.42 677.02,413.42 Z"/><path d="M675.47,415.41 C675.43,415.38 675.27,415.31 675.16,415.34 C675.06,415.36 674.92,415.47 674.82,415.54 C674.71,415.60 674.55,415.71 674.55,415.71 C674.55,415.71 674.73,415.75 674.73,415.75 C674.73,415.75 674.67,415.97 674.62,416.10 C674.58,416.23 674.50,416.41 674.44,416.54 C674.38,416.67 674.29,416.88 674.29,416.88 C674.29,416.88 674.03,417.03 673.94,417.15 C673.84,417.26 673.78,417.43 673.74,417.58 C673.70,417.72 673.69,417.87 673.69,418.01 C673.69,418.16 673.72,418.31 673.76,418.44 C673.80,418.58 673.87,418.68 673.94,418.79 C674.00,418.91 674.16,419.14 674.16,419.14 C674.16,419.14 674.29,419.06 674.29,419.06 C674.29,419.06 674.55,419.16 674.73,419.23 C674.90,419.30 675.12,419.39 675.34,419.49 C675.56,419.59 675.82,419.74 676.04,419.84 C676.26,419.93 676.66,420.06 676.66,420.06 C676.66,420.06 676.21,419.77 675.96,419.62 C675.71,419.47 675.40,419.34 675.16,419.19 C674.93,419.04 674.73,418.84 674.55,418.71 C674.37,418.57 674.22,418.48 674.11,418.36 C674.00,418.25 673.93,418.11 673.89,418.01 C673.86,417.91 673.87,417.82 673.89,417.75 C673.91,417.69 673.97,417.64 674.02,417.62 C674.08,417.61 674.15,417.62 674.20,417.67 C674.25,417.71 674.34,417.88 674.34,417.88 C674.34,417.88 674.36,417.69 674.37,417.58 C674.37,417.47 674.36,417.34 674.37,417.23 C674.38,417.12 674.39,417.05 674.42,416.93 C674.46,416.81 674.51,416.65 674.57,416.52 C674.63,416.38 674.71,416.22 674.79,416.10 C674.87,415.97 674.96,415.85 675.07,415.75 C675.17,415.65 675.36,415.57 675.43,415.51 C675.50,415.45 675.51,415.43 675.47,415.41 Z"/><path d="M675.99,416.13 C675.99,416.13 676.25,416.04 676.39,416.01 C676.53,415.98 676.70,415.95 676.83,415.95 C676.97,415.94 677.08,415.96 677.21,415.99 C677.33,416.02 677.47,416.07 677.58,416.11 C677.70,416.16 677.79,416.22 677.88,416.26 C677.98,416.30 678.13,416.34 678.13,416.34 C678.13,416.34 678.28,416.28 678.32,416.22 C678.36,416.17 678.37,416.10 678.37,416.02 C678.37,415.95 678.33,415.84 678.30,415.77 C678.27,415.70 678.19,415.61 678.19,415.61 C678.19,415.61 678.37,415.73 678.43,415.81 C678.49,415.88 678.54,415.97 678.56,416.06 C678.58,416.15 678.58,416.25 678.56,416.33 C678.55,416.42 678.51,416.48 678.47,416.55 C678.43,416.63 678.38,416.71 678.33,416.78 C678.28,416.84 678.23,416.89 678.16,416.95 C678.09,417.00 677.98,417.07 677.88,417.11 C677.79,417.15 677.70,417.18 677.61,417.20 C677.52,417.22 677.43,417.22 677.36,417.23 C677.28,417.23 677.17,417.22 677.17,417.22 C677.17,417.22 677.27,417.04 677.27,417.04 C677.27,417.04 677.48,417.05 677.57,417.04 C677.66,417.03 677.74,417.01 677.82,416.97 C677.90,416.94 677.99,416.88 678.04,416.84 C678.08,416.80 678.08,416.76 678.08,416.76 C678.08,416.76 678.05,416.76 678.04,416.73 C678.02,416.70 677.99,416.64 677.96,416.58 C677.93,416.53 677.89,416.46 677.84,416.41 C677.79,416.35 677.72,416.30 677.66,416.26 C677.60,416.21 677.53,416.17 677.46,416.13 C677.38,416.10 677.31,416.07 677.21,416.05 C677.10,416.03 676.97,416.02 676.83,416.02 C676.70,416.03 676.53,416.06 676.39,416.08 C676.25,416.10 675.99,416.13 675.99,416.13 Z"/><path d="M676.76,416.02 C676.76,416.02 677.10,416.04 677.21,416.07 C677.31,416.10 677.33,416.16 677.38,416.21 C677.44,416.26 677.50,416.33 677.53,416.38 C677.57,416.44 677.59,416.48 677.60,416.53 C677.61,416.58 677.60,416.63 677.58,416.68 C677.56,416.73 677.53,416.78 677.48,416.83 C677.44,416.87 677.37,416.90 677.33,416.94 C677.29,416.98 677.28,417.02 677.26,417.06 C677.23,417.11 677.17,417.22 677.17,417.22 C677.17,417.22 677.18,417.27 677.23,417.30 C677.28,417.34 677.37,417.39 677.46,417.43 C677.55,417.46 677.67,417.49 677.78,417.51 C677.89,417.53 678.10,417.55 678.10,417.55 C678.10,417.55 677.97,417.63 677.88,417.64 C677.80,417.65 677.67,417.63 677.57,417.61 C677.47,417.60 677.36,417.57 677.27,417.53 C677.19,417.50 677.11,417.45 677.06,417.40 C677.01,417.36 676.97,417.31 676.95,417.26 C676.93,417.21 676.93,417.14 676.94,417.09 C676.94,417.04 676.96,416.99 677.00,416.95 C677.03,416.90 677.09,416.87 677.14,416.84 C677.20,416.80 677.27,416.78 677.32,416.73 C677.36,416.69 677.39,416.62 677.41,416.57 C677.42,416.52 677.42,416.46 677.40,416.41 C677.37,416.35 677.34,416.30 677.28,416.26 C677.23,416.21 677.16,416.17 677.08,416.15 C677.01,416.12 676.83,416.11 676.83,416.11 C676.83,416.11 676.76,416.02 676.76,416.02 Z"/><path d="M675.91,417.84 C675.94,417.81 676.02,417.74 676.13,417.75 C676.25,417.76 676.40,417.83 676.59,417.88 C676.77,417.94 677.01,418.02 677.23,418.06 C677.44,418.09 677.66,418.09 677.87,418.08 C678.09,418.07 678.32,418.03 678.52,417.98 C678.71,417.93 678.88,417.87 679.03,417.78 C679.18,417.69 679.30,417.58 679.42,417.46 C679.54,417.35 679.66,417.17 679.74,417.08 C679.81,416.99 679.87,416.92 679.87,416.92 C679.87,416.92 679.85,417.15 679.80,417.27 C679.76,417.39 679.65,417.56 679.61,417.65 C679.57,417.75 679.55,417.84 679.55,417.84 C679.55,417.84 679.86,417.66 680.00,417.59 C680.14,417.52 680.29,417.45 680.38,417.40 C680.48,417.35 680.58,417.27 680.58,417.27 C680.58,417.27 680.38,417.59 680.25,417.72 C680.13,417.84 679.95,417.92 679.80,418.00 C679.65,418.08 679.49,418.16 679.35,418.19 C679.21,418.23 678.97,418.19 678.97,418.19 C678.97,418.19 678.90,418.07 678.90,418.07 C678.90,418.07 678.42,418.15 678.19,418.18 C677.97,418.20 677.76,418.20 677.55,418.20 C677.33,418.20 677.10,418.14 676.91,418.15 C676.71,418.16 676.36,418.26 676.36,418.26 C676.36,418.26 676.26,418.07 676.26,418.07 C676.26,418.07 676.03,418.01 675.97,417.97 C675.91,417.93 675.88,417.88 675.91,417.84 Z"/></g></svg>
<svg style="left:770.5px;top:413.5px" width="7" height="8"><path d="M1.5,3.5V2.3Q3.5,0 5.5,2.3V3.5" stroke="#222" stroke-width="1" fill="none"/><rect x="0.8" y="3.5" width="5.4" height="4" fill="#f0f0f0" stroke="#222" stroke-width="0.9"/></svg>
<div class="a" style="left:787.7px;top:407px;width:9px;height:158px;background:#f0f0f0"></div>
<svg style="left:789.5px;top:411.5px" width="6" height="3.5"><path d="M0.5,3L3,0.5L5.5,3Z" fill="#8a8a8a"/></svg>
<svg style="left:789.5px;top:558.5px" width="6" height="3.5"><path d="M0.5,0.5L3,3L5.5,0.5Z" fill="#8a8a8a"/></svg>
<div class="a" style="left:651px;top:565px;width:135px;height:1px;background:#b8b8b8"></div>
<div class="a" style="left:651px;top:566px;width:146px;height:12px;background:#d8d8d8"></div>
<svg style="left:0;top:0" width="800" height="587" viewBox="0 0 800 587">
<ellipse cx="674" cy="571.5" rx="2.6" ry="1.8" fill="none" stroke="#666" stroke-width="0.9"/><ellipse cx="679.5" cy="571.5" rx="2.6" ry="1.8" fill="none" stroke="#666" stroke-width="0.9"/>
<text x="690" y="575" font-family="Liberation Serif" font-style="italic" font-size="8.5" fill="#555">fx</text><circle cx="699.5" cy="574.5" r="0.4" fill="#555"/>
<rect x="706.5" y="568" width="8.7" height="7" fill="#ccc" stroke="#888" stroke-width="0.6"/><circle cx="710.8" cy="571.5" r="2.3" fill="#fafafa"/>
<circle cx="728" cy="571.5" r="3.5" fill="#333"/><path d="M725.5,574 L730.5,569 A3.5,3.5 0 0 1 725.5,574Z" fill="#eee"/><path d="M732,574.5L734,574.5L733,575.8Z" fill="#333"/>
<path d="M741.5,568.5H748.3V575H741.5Z" fill="#f4f4f4" stroke="#333" stroke-width="0.8"/>
<rect x="759.5" y="568.5" width="5.5" height="6.5" fill="#f4f4f4" stroke="#333" stroke-width="0.8"/><rect x="760.5" y="572" width="2.5" height="2.5" fill="#333"/>
<path d="M775.5,569H781.5M776.5,570L777,575H780L780.5,570" stroke="#777" stroke-width="0.8" fill="#eee"/>
</g></svg>
<div class="a" style="left:649px;top:578px;width:148px;height:3px;background:#efefef"></div>
<svg style="left:0;top:0" width="800" height="587" viewBox="0 0 800 587">
<circle cx="689" cy="166" r="3" fill="#fff" stroke="#111" stroke-width="1"/><path d="M689,163V169A3,3 0 0 1 689,163Z" fill="#111"/><path d="M689,160.5V162M689,170V171.5M683.5,166H685M693,166H694.5M685,162L686,163M692,169L693,170M693,162L692,163M685,170L686,169" stroke="#111" stroke-width="1"/>
<path d="M700.8,170.5 L701.5,167 L702.5,168 L703.5,163 L704.5,166 L705.5,161 L706.5,165 L707.5,162.5 L708.5,166 L709.5,160.5 L710.5,165 L711.5,163 L712.5,167 L713.8,170.5Z" fill="#333"/><path d="M701,171.6H714" stroke="#555" stroke-width="0.6" stroke-dasharray="1,2.5"/>
<path d="M719.5,160.5V171.5H732" stroke="#333" stroke-width="0.8" fill="none"/><path d="M722,160.5V171.5M724.5,160.5V171.5M727,160.5V171.5M729.5,160.5V171.5M719.5,163H732M719.5,165.5H732M719.5,168H732" stroke="#bbb" stroke-width="0.4"/><path d="M720,171 Q724,170 725.5,165.5 Q727,161 731.5,160.7" stroke="#222" stroke-width="1" fill="none"/>
<path d="M737.5,171.5 L751,160.5 V171.5Z" fill="#111"/><path d="M739,162.5H742M740.5,161V164" stroke="#111" stroke-width="0.9"/><rect x="746.5" y="168" width="3" height="1.6" fill="#fff"/>
<path d="M665,185.5 L670.5,196.5 L676.5,185.5 L674,185.5 L670.5,193 L667.5,185.5Z" fill="#777"/><path d="M667.5,185.5 L670.5,193 L674,185.5Z" fill="#aaa"/>
<rect x="683" y="185" width="3" height="2.5" fill="#666"/><rect x="687" y="185" width="3" height="2.5" fill="#888"/><rect x="691" y="185" width="3" height="2.5" fill="#aaa"/><rect x="683" y="189" width="13" height="1.5" fill="#222"/><rect x="683" y="191.5" width="13" height="4.5" fill="url(#hsg)"/>
<defs><linearGradient id="hsg"><stop offset="0" stop-color="#111"/><stop offset="1" stop-color="#eee"/></linearGradient><linearGradient id="gm"><stop offset="0" stop-color="#fafafa"/><stop offset="1" stop-color="#111"/></linearGradient><linearGradient id="pst" x1="0" y1="1" x2="1" y2="0"><stop offset="0" stop-color="#555"/><stop offset="0.5" stop-color="#bbb"/><stop offset="1" stop-color="#444"/></linearGradient></defs>
<path d="M707.5,186V196M703.5,187.5H711.5M702,193 L703.5,188 L705,193Z M710,193 L711.5,188 L713,193Z" stroke="#111" stroke-width="0.8" fill="none"/><path d="M701.5,193 Q703.5,196 705.5,193Z M709.5,193 Q711.5,196 713.5,193Z" fill="#111"/><path d="M705,196.2H710" stroke="#111" stroke-width="1.2"/><circle cx="707.5" cy="185.8" r="1" fill="#111"/>
<path d="M719,185 H732 L719,196.5Z" fill="#111"/>
<circle cx="742" cy="189" r="4.2" fill="#ccc" stroke="#444" stroke-width="0.9"/><rect x="743" y="191" width="7.5" height="5.5" fill="#555"/><rect x="744.5" y="192.5" width="4" height="2.5" fill="#888"/>
<circle cx="760" cy="188.5" r="3.3" fill="#999"/><circle cx="765.2" cy="191" r="3.3" fill="#333"/><circle cx="759.5" cy="193" r="3.3" fill="#ccc"/><circle cx="762.5" cy="190.5" r="1.8" fill="#666"/>
<rect x="674" y="210.5" width="6" height="5" fill="#fff" stroke="#333" stroke-width="0.7"/><rect x="680" y="215.5" width="7.5" height="6" fill="#111"/><path d="M675,214 L677,212.5 L678.5,213.5" stroke="#333" stroke-width="0.6" fill="none"/><rect x="682" y="217" width="3" height="2" fill="#fff"/>
<rect x="692" y="210.5" width="13" height="11" fill="url(#pst)" stroke="#444" stroke-width="0.6"/>
<rect x="710.5" y="210.5" width="13" height="11" fill="#222"/><path d="M711,222 L713.5,222 L723.5,210.5 L721,210.5Z" fill="#fff"/><path d="M710.5,221.5 L713,221.5 L710.5,218Z" fill="#fff"/>
<rect x="728.5" y="210.5" width="13" height="11" fill="url(#gm)" stroke="#333" stroke-width="0.6"/>
<path d="M746.5,210.5H760L753.25,216Z" fill="#bbb"/><path d="M746.5,221.5H760L753.25,216Z" fill="#222"/><path d="M746.5,210.5V221.5L753.25,216Z M760,210.5V221.5L753.25,216Z" fill="#e6e6e6"/>
</svg>
<div class="t" style="left:654.10px;top:51.54px;font-size:6.7px;line-height:7.70px;font-weight:700;font-style:normal;color:#3c3c3c;transform:scaleX(0.907);transform-origin:0 0;">COLOR</div>
<div class="t" style="left:683.60px;top:51.54px;font-size:6.7px;line-height:7.70px;font-weight:700;font-style:normal;color:#2e2e2e;transform:scaleX(0.906);transform-origin:0 0;">SWATCHES</div>
<div class="t" style="left:726.10px;top:51.54px;font-size:6.7px;line-height:7.70px;font-weight:700;font-style:normal;color:#2e2e2e;transform:scaleX(0.823);transform-origin:0 0;">STYLES</div>
<div class="t" style="left:677.10px;top:65.56px;font-size:6.9px;line-height:7.93px;font-weight:700;font-style:normal;color:#2a2a2a;transform:scaleX(0.983);transform-origin:0 0;">R</div>
<div class="t" style="left:677.10px;top:80.06px;font-size:6.9px;line-height:7.93px;font-weight:700;font-style:normal;color:#2a2a2a;transform:scaleX(1.098);transform-origin:0 0;">G</div>
<div class="t" style="left:677.10px;top:94.06px;font-size:6.9px;line-height:7.93px;font-weight:700;font-style:normal;color:#2a2a2a;transform:scaleX(0.983);transform-origin:0 0;">B</div>
<div class="t" style="left:755.20px;top:65.78px;font-size:7.2px;line-height:8.27px;font-weight:700;font-style:normal;color:#1a1a1a;transform:scaleX(1.150);transform-origin:0 0;">5</div>
<div class="t" style="left:755.20px;top:80.28px;font-size:7.2px;line-height:8.27px;font-weight:700;font-style:normal;color:#1a1a1a;transform:scaleX(1.150);transform-origin:0 0;">5</div>
<div class="t" style="left:755.20px;top:94.28px;font-size:7.2px;line-height:8.27px;font-weight:700;font-style:normal;color:#1a1a1a;transform:scaleX(1.150);transform-origin:0 0;">5</div>
<div class="t" style="left:654.35px;top:125.24px;font-size:6.7px;line-height:7.70px;font-weight:700;font-style:normal;color:#3c3c3c;transform:scaleX(0.904);transform-origin:0 0;">ADJUSTMENTS</div>
<div class="t" style="left:707.20px;top:125.24px;font-size:6.7px;line-height:7.70px;font-weight:700;font-style:normal;color:#2e2e2e;transform:scaleX(0.923);transform-origin:0 0;">MASKS</div>
<div class="t" style="left:653.20px;top:137.91px;font-size:6.4px;line-height:7.35px;font-weight:700;font-style:normal;color:#141414;transform:scaleX(1.031);transform-origin:0 0;">Add an adjustment</div>
<div class="t" style="left:670.60px;top:237.40px;font-size:6.3px;line-height:7.24px;font-weight:400;font-style:normal;color:#1c1c1c;transform:scaleX(0.930);transform-origin:0 0;">Levels Presets</div>
<div class="t" style="left:670.60px;top:250.50px;font-size:6.3px;line-height:7.24px;font-weight:400;font-style:normal;color:#1c1c1c;transform:scaleX(0.964);transform-origin:0 0;">Curves Presets</div>
<div class="t" style="left:670.60px;top:263.60px;font-size:6.3px;line-height:7.24px;font-weight:400;font-style:normal;color:#1c1c1c;transform:scaleX(0.966);transform-origin:0 0;">Exposure Presets</div>
<div class="t" style="left:670.60px;top:276.70px;font-size:6.3px;line-height:7.24px;font-weight:400;font-style:normal;color:#1c1c1c;transform:scaleX(0.981);transform-origin:0 0;">Hue/Saturation Presets</div>
<div class="t" style="left:670.60px;top:289.80px;font-size:6.3px;line-height:7.24px;font-weight:400;font-style:normal;color:#1c1c1c;transform:scaleX(0.978);transform-origin:0 0;">Black & White Presets</div>
<div class="t" style="left:670.60px;top:302.90px;font-size:6.3px;line-height:7.24px;font-weight:400;font-style:normal;color:#1c1c1c;transform:scaleX(0.972);transform-origin:0 0;">Channel Mixer Presets</div>
<div class="t" style="left:670.60px;top:316.00px;font-size:6.3px;line-height:7.24px;font-weight:400;font-style:normal;color:#1c1c1c;transform:scaleX(0.972);transform-origin:0 0;">Selective Color Presets</div>
<div class="t" style="left:653.80px;top:349.74px;font-size:6.7px;line-height:7.70px;font-weight:700;font-style:normal;color:#3c3c3c;transform:scaleX(0.864);transform-origin:0 0;">LAYERS</div>
<div class="t" style="left:684.40px;top:349.74px;font-size:6.7px;line-height:7.70px;font-weight:700;font-style:normal;color:#2e2e2e;transform:scaleX(0.918);transform-origin:0 0;">CHANNELS</div>
<div class="t" style="left:726.00px;top:349.74px;font-size:6.7px;line-height:7.70px;font-weight:700;font-style:normal;color:#2e2e2e;transform:scaleX(0.992);transform-origin:0 0;">PATHS</div>
<div class="t" style="left:654.80px;top:363.42px;font-size:6.5px;line-height:7.47px;font-weight:400;font-style:normal;color:#7a7a7a;transform:scaleX(0.988);transform-origin:0 0;">Normal</div>
<div class="t" style="left:736.80px;top:363.42px;font-size:6.5px;line-height:7.47px;font-weight:400;font-style:normal;color:#a4a4a4;transform:scaleX(1.036);transform-origin:0 0;">Opacity:</div>
<div class="t" style="left:765.90px;top:364.10px;font-size:6.3px;line-height:7.24px;font-weight:400;font-style:normal;color:#8a8a8a;transform:scaleX(1.006);transform-origin:0 0;">100%</div>
<div class="t" style="left:652.80px;top:379.62px;font-size:6.5px;line-height:7.47px;font-weight:400;font-style:normal;color:#a4a4a4;transform:scaleX(1.077);transform-origin:0 0;">Unify:</div>
<div class="t" style="left:740.60px;top:379.62px;font-size:6.5px;line-height:7.47px;font-weight:400;font-style:normal;color:#a4a4a4;transform:scaleX(0.960);transform-origin:0 0;">Propagate Frame 1</div>
<div class="t" style="left:654.80px;top:395.72px;font-size:6.5px;line-height:7.47px;font-weight:400;font-style:normal;color:#9a9a9a;transform:scaleX(1.068);transform-origin:0 0;">Lock:</div>
<div class="t" style="left:751.30px;top:395.72px;font-size:6.5px;line-height:7.47px;font-weight:400;font-style:normal;color:#a4a4a4;transform:scaleX(1.009);transform-origin:0 0;">Fill:</div>
<div class="t" style="left:765.90px;top:396.20px;font-size:6.3px;line-height:7.24px;font-weight:400;font-style:normal;color:#8a8a8a;transform:scaleX(1.006);transform-origin:0 0;">100%</div>
<div class="t" style="left:692.60px;top:414.33px;font-size:6.6px;line-height:7.58px;font-weight:400;font-style:italic;color:#ffffff;transform:scaleX(1.031);transform-origin:0 0;">Background</div>
<div class="t" style="left:31.60px;top:6.69px;font-size:7.8px;line-height:8.96px;font-weight:400;font-style:normal;color:#141414;transform:scaleX(0.906);transform-origin:0 0;">File</div>
<div class="t" style="left:52.35px;top:6.69px;font-size:7.8px;line-height:8.96px;font-weight:400;font-style:normal;color:#141414;transform:scaleX(0.960);transform-origin:0 0;">Edit</div>
<div class="t" style="left:75.20px;top:6.69px;font-size:7.8px;line-height:8.96px;font-weight:400;font-style:normal;color:#141414;transform:scaleX(0.964);transform-origin:0 0;">Image</div>
<div class="t" style="left:106.50px;top:6.69px;font-size:7.8px;line-height:8.96px;font-weight:400;font-style:normal;color:#141414;transform:scaleX(0.943);transform-origin:0 0;">Layer</div>
<div class="t" style="left:134.60px;top:6.69px;font-size:7.8px;line-height:8.96px;font-weight:400;font-style:normal;color:#141414;transform:scaleX(0.937);transform-origin:0 0;">Select</div>
<div class="t" style="left:164.60px;top:6.69px;font-size:7.8px;line-height:8.96px;font-weight:400;font-style:normal;color:#141414;transform:scaleX(0.990);transform-origin:0 0;">Filter</div>
<div class="t" style="left:191.50px;top:6.69px;font-size:7.8px;line-height:8.96px;font-weight:400;font-style:normal;color:#141414;transform:scaleX(0.955);transform-origin:0 0;">Analysis</div>
<div class="t" style="left:229.35px;top:6.69px;font-size:7.8px;line-height:8.96px;font-weight:400;font-style:normal;color:#141414;transform:scaleX(1.018);transform-origin:0 0;">3D</div>
<div class="t" style="left:248.35px;top:6.69px;font-size:7.8px;line-height:8.96px;font-weight:400;font-style:normal;color:#141414;transform:scaleX(0.987);transform-origin:0 0;">View</div>
<div class="t" style="left:274.60px;top:6.69px;font-size:7.8px;line-height:8.96px;font-weight:400;font-style:normal;color:#141414;transform:scaleX(1.033);transform-origin:0 0;">Window</div>
<div class="t" style="left:313.10px;top:6.69px;font-size:7.8px;line-height:8.96px;font-weight:400;font-style:normal;color:#141414;transform:scaleX(1.006);transform-origin:0 0;">Help</div>
<div class="t" style="left:8.60px;top:5.86px;font-size:9px;line-height:10.34px;font-weight:400;font-style:normal;color:#06121f;transform:scaleX(0.989);transform-origin:0 0;-webkit-text-stroke:0.3px #06121f">Ps</div>
<div class="t" style="left:348.90px;top:6.38px;font-size:7.2px;line-height:8.27px;font-weight:700;font-style:normal;color:#2a2a2a;transform:scaleX(1.025);transform-origin:0 0;">Br</div>
<div class="t" style="left:400.60px;top:7.26px;font-size:7px;line-height:8.04px;font-weight:400;font-style:normal;color:#505050;transform:scaleX(1.042);transform-origin:0 0;">100%</div>
<div class="t" style="left:697.85px;top:6.96px;font-size:7.5px;line-height:8.62px;font-weight:700;font-style:normal;color:#2c3038;transform:scaleX(0.895);transform-origin:0 0;">ESSENTIALS</div>
<div class="t" style="left:52.10px;top:27.72px;font-size:7.6px;line-height:8.73px;font-weight:400;font-style:normal;color:#141414;transform:scaleX(0.870);transform-origin:0 0;">Auto-Select:</div>
<div class="t" style="left:91.60px;top:27.62px;font-size:7.6px;line-height:8.73px;font-weight:400;font-style:normal;color:#141414;transform:scaleX(0.895);transform-origin:0 0;">Group</div>
<div class="t" style="left:153.20px;top:27.72px;font-size:7.6px;line-height:8.73px;font-weight:400;font-style:normal;color:#141414;transform:scaleX(0.856);transform-origin:0 0;">Show Transform Controls</div>
<div class="t" style="left:31.60px;top:44.78px;font-size:7.2px;line-height:8.27px;font-weight:400;font-style:normal;color:#1c1c1c;transform:scaleX(0.993);transform-origin:0 0;">Untitled-1 @ 100% (RGB/8) *</div>
<div class="t" style="left:89.10px;top:55.62px;font-size:6.5px;line-height:7.47px;font-weight:400;font-style:normal;color:#222;transform:scaleX(1.241);transform-origin:0 0;">0</div>
<div class="t" style="left:277.10px;top:55.62px;font-size:6.5px;line-height:7.47px;font-weight:400;font-style:normal;color:#222;transform:scaleX(1.241);transform-origin:0 0;">1</div>
<div class="t" style="left:465.10px;top:55.62px;font-size:6.5px;line-height:7.47px;font-weight:400;font-style:normal;color:#222;transform:scaleX(1.241);transform-origin:0 0;">2</div>
<div class="t" style="left:27.10px;top:92.62px;font-size:6.5px;line-height:7.47px;font-weight:400;font-style:normal;color:#222;transform:scaleX(1.241);transform-origin:0 0;">0</div>
<div class="t" style="left:27.10px;top:280.62px;font-size:6.5px;line-height:7.47px;font-weight:400;font-style:normal;color:#222;transform:scaleX(1.241);transform-origin:0 0;">1</div>
<div class="t" style="left:27.10px;top:468.62px;font-size:6.5px;line-height:7.47px;font-weight:400;font-style:normal;color:#222;transform:scaleX(1.241);transform-origin:0 0;">2</div>
<div class="t" style="left:29.60px;top:495.81px;font-size:6.4px;line-height:7.35px;font-weight:400;font-style:normal;color:#141414;transform:scaleX(1.002);transform-origin:0 0;">100%</div>
<div class="t" style="left:97.60px;top:495.81px;font-size:6.4px;line-height:7.35px;font-weight:400;font-style:normal;color:#141414;transform:scaleX(0.975);transform-origin:0 0;">Doc: 1.37M/1.26M</div>
<div class="t" style="left:30.60px;top:506.05px;font-size:6.8px;line-height:7.81px;font-weight:400;font-style:normal;color:#222;transform:scaleX(0.971);transform-origin:0 0;">ANIMATION (FRAMES)</div>
<div class="t" style="left:107.60px;top:506.05px;font-size:6.8px;line-height:7.81px;font-weight:400;font-style:normal;color:#222;transform:scaleX(0.912);transform-origin:0 0;">MEASUREMENT LOG</div>
<div class="t" style="left:31.80px;top:520.12px;font-size:6.5px;line-height:7.47px;font-weight:700;font-style:normal;color:#111;transform:scaleX(1.076);transform-origin:0 0;">1</div>
<div class="t" style="left:45.30px;top:557.57px;font-size:6px;line-height:6.89px;font-weight:700;font-style:normal;color:#ffffff;transform:scaleX(0.971);transform-origin:0 0;">0 sec.</div>
<div class="t" style="left:30.60px;top:567.00px;font-size:6.3px;line-height:7.24px;font-weight:400;font-style:normal;color:#141414;transform:scaleX(1.041);transform-origin:0 0;">Forever</div>
</body></html>
